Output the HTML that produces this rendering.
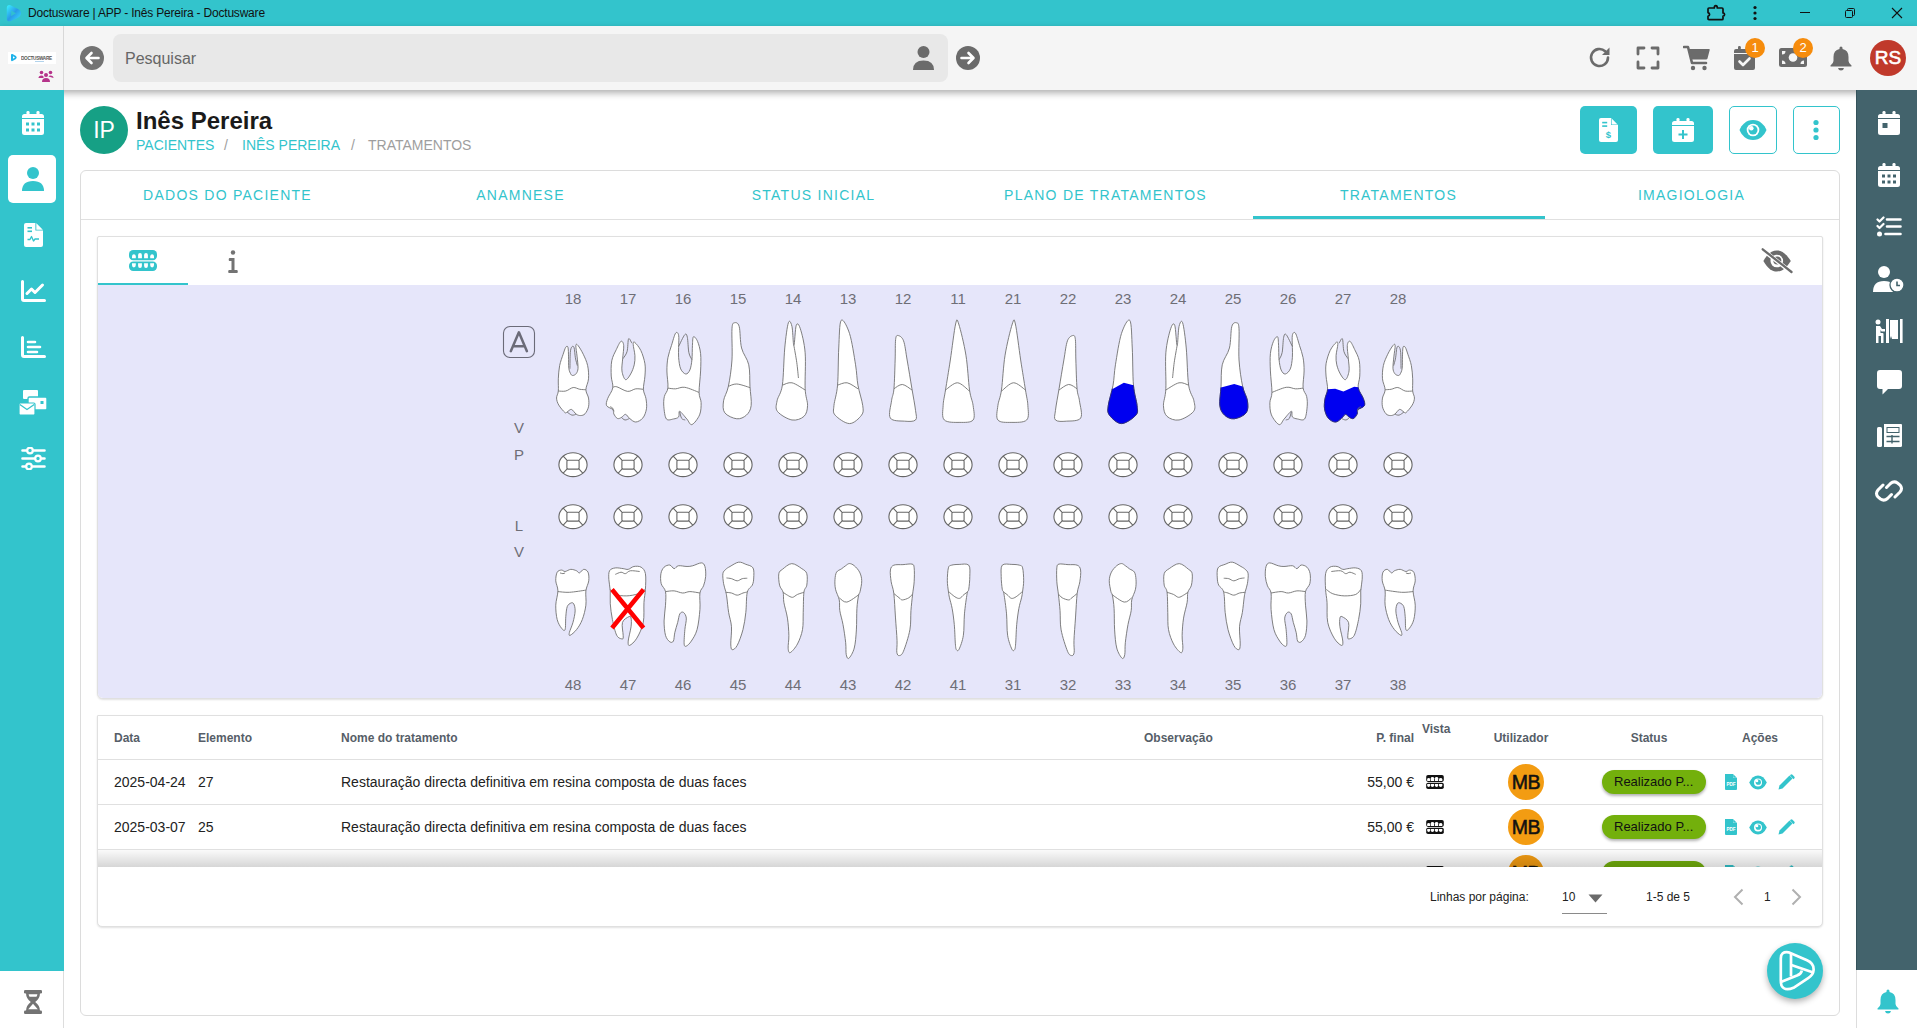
<!DOCTYPE html>
<html><head><meta charset="utf-8">
<style>
*{box-sizing:border-box;margin:0;padding:0}
html,body{width:1917px;height:1028px;overflow:hidden;background:#fff;font-family:"Liberation Sans",sans-serif;position:relative}
.a{position:absolute}
#titlebar{left:0;top:0;width:1917px;height:26px;background:#33c4cc}
#titlebar .t{left:28px;top:6px;font-size:12px;letter-spacing:-.2px;color:#111;white-space:nowrap}
#header{left:0;top:26px;width:1917px;height:64px;background:#f5f5f5;box-shadow:0 3px 7px rgba(0,0,0,.32)}
#logo{left:0;top:26px;width:64px;height:64px;border-right:1px solid #d8d8d8;background:#f5f5f5;z-index:3}
#search{left:113px;top:34px;width:835px;height:48px;background:#e8e8e8;border-radius:8px}
#search .ph{left:12px;top:16px;font-size:16px;color:#666}
#lside{left:0;top:90px;width:64px;height:881px;background:#33c4cc;z-index:2}
#lside2{left:0;top:971px;width:64px;height:57px;background:#fff;border-right:1px solid #ddd;z-index:2}
#rside{left:1856px;top:90px;width:61px;height:880px;background:#43636c;border-left:1px solid #34525a;z-index:2}
#rside2{left:1856px;top:970px;width:61px;height:58px;background:#fff;border-left:1px solid #ddd;z-index:2}
.card{border:1px solid #dcdcdc;border-radius:6px;background:#fff}
.tab{top:170px;height:49px;width:293px;text-align:center;font-size:14px;letter-spacing:1.25px;color:#33c4cc;line-height:50px;font-weight:500}
.num{width:40px;text-align:center;font-size:15px;color:#6e6e76}
.lt{width:20px;text-align:center;font-size:15px;color:#6e6e76}
.th{font-size:12px;font-weight:bold;color:#565e68;white-space:nowrap}
.td{font-size:14px;color:#222;white-space:nowrap}
.mb{width:36px;height:36px;border-radius:50%;background:#f39c12;color:#111;font-size:19.5px;line-height:37px;text-align:center;letter-spacing:-.4px;-webkit-text-stroke:.55px #111}
.chip{width:104px;height:24px;border-radius:12px;background:#73b00c;color:#111;font-size:13px;line-height:24px;padding-left:12px;white-space:nowrap;box-shadow:0 2px 3px rgba(0,0,0,.3)}
.hl{height:1px;background:#e0e0e0}
</style></head><body>
<div id="titlebar" class="a"><div class="t a">Doctusware | APP - Inês Pereira - Doctusware</div></div>
<div id="header" class="a"></div>
<div id="logo" class="a"></div>
<div id="search" class="a"><div class="ph a">Pesquisar</div></div>
<div id="lside" class="a"></div>
<div id="lside2" class="a"></div>
<div id="rside" class="a"></div>
<div id="rside2" class="a"></div>


<!-- title bar icons -->
<svg class="a" style="left:0;top:0;z-index:5" width="26" height="26" viewBox="0 0 26 26"><defs><linearGradient id="lg1" x1="0" y1="0" x2="1" y2="1"><stop offset="0" stop-color="#3af2ff"/><stop offset=".5" stop-color="#2a9ae8"/><stop offset="1" stop-color="#38e0ff"/></linearGradient></defs><path d="M6.8 8 Q6.8 4.6 10.5 5.2 L18.5 9.2 Q21.5 11 21 14 Q20.6 16.5 18 17.8 L11.5 20.8 Q6.8 22.5 6.8 18.5Z" fill="url(#lg1)"/><path d="M11.2 10.5 L16 13.2 L11.2 16.2Z" fill="#33c4cc" opacity=".85"/></svg>
<svg class="a" style="left:1706px;top:3px" width="20" height="19" viewBox="0 0 20 19"><path d="M3 5 H8.3 Q8.3 2.6 9.8 2.6 Q11.3 2.6 11.3 5 H16 Q17 5 17 6 V10 Q18.6 10 18.6 11.6 Q18.6 13.2 17 13.2 V15.7 Q17 16.7 16 16.7 H3 Q2 16.7 2 15.7 V13.2 Q3.6 12.6 3.6 11.4 Q3.6 10.2 2 9.6 V6 Q2 5 3 5Z" fill="none" stroke="#111" stroke-width="1.7" stroke-linejoin="round"/></svg>
<svg class="a" style="left:1750px;top:5px" width="10" height="16" viewBox="0 0 10 16"><circle cx="5" cy="2.5" r="1.6" fill="#111"/><circle cx="5" cy="8" r="1.6" fill="#111"/><circle cx="5" cy="13.5" r="1.6" fill="#111"/></svg>
<div class="a" style="left:1800px;top:12px;width:10px;height:1px;background:#111"></div>
<svg class="a" style="left:1843px;top:6px" width="14" height="14" viewBox="0 0 14 14"><rect x="2.5" y="4.5" width="7" height="7" rx="1" fill="none" stroke="#111" stroke-width="1"/><path d="M4.5 4.5 V3.5 Q4.5 2.5 5.5 2.5 H10.5 Q11.5 2.5 11.5 3.5 V8.5 Q11.5 9.5 10.5 9.5 H9.5" fill="none" stroke="#111" stroke-width="1"/></svg>
<svg class="a" style="left:1890px;top:6px" width="14" height="14" viewBox="0 0 14 14"><path d="M2 2 L12 12 M12 2 L2 12" stroke="#111" stroke-width="1.1"/></svg>

<!-- logo column -->
<div class="a" style="left:8px;top:52px;width:48px;height:12px;background:#fff;z-index:4"></div>
<svg class="a" style="left:10px;top:53px;z-index:5" width="8" height="9" viewBox="0 0 8 9"><path d="M1 2 Q1 0.5 2.5 1 L6 3 Q7.5 4.5 6 6 L2.5 8 Q1 8.5 1 7Z" fill="#1fb3ea"/><path d="M3 3.3 L5 4.5 L3 5.7Z" fill="#fff"/></svg><div class="a" style="left:21px;top:55px;font-size:5.5px;color:#555;z-index:5;letter-spacing:-.35px;font-weight:bold;transform:scaleX(.85);transform-origin:0 0;white-space:nowrap">DOCTUSWARE</div><div class="a" style="left:35px;top:60.5px;width:9px;height:1px;background:#7fb5e0;z-index:5;opacity:.6"></div>
<svg class="a" style="left:38px;top:70px;z-index:5" width="16" height="13" viewBox="0 0 16 13"><circle cx="3.5" cy="2.5" r="1.8" fill="#b5338a"/><circle cx="12.5" cy="2.5" r="1.8" fill="#b5338a"/><circle cx="8" cy="5" r="2" fill="#b5338a"/><path d="M0.5 8 Q0.5 5.5 3.5 5.5 Q5 5.5 5.5 6.5 L5.5 8Z M10.5 6.5 Q11 5.5 12.5 5.5 Q15.5 5.5 15.5 8Z" fill="#b5338a"/><path d="M4 12 Q4 8 8 8 Q12 8 12 12Z" fill="#b5338a"/></svg>

<!-- header icons -->
<svg class="a" style="left:80px;top:46px;z-index:5" width="24" height="24" viewBox="0 0 24 24"><circle cx="12" cy="12" r="12" fill="#737373"/><path d="M18.5 12 H7 M11.5 7 L6.5 12 L11.5 17" fill="none" stroke="#fff" stroke-width="2.6" stroke-linecap="round" stroke-linejoin="round"/></svg>
<svg class="a" style="left:912px;top:46px;z-index:5" width="23" height="25" viewBox="0 0 23 25"><circle cx="11.5" cy="6" r="6" fill="#6b6b6b"/><path d="M1 24 Q1 14.5 11.5 14.5 Q22 14.5 22 24Z" fill="#6b6b6b"/></svg>
<svg class="a" style="left:956px;top:46px;z-index:5" width="24" height="24" viewBox="0 0 24 24"><circle cx="12" cy="12" r="12" fill="#6b6b6b"/><path d="M5.5 12 H17 M12.5 7 L17.5 12 L12.5 17" fill="none" stroke="#fff" stroke-width="2.6" stroke-linecap="round" stroke-linejoin="round"/></svg>

<svg class="a" style="left:1588px;top:46px;z-index:5" width="24" height="24" viewBox="0 0 24 24"><path d="M20 11.5 A8.5 8.5 0 1 1 17.2 5.2" fill="none" stroke="#6b6b6b" stroke-width="2.6" stroke-linecap="round"/><path d="M21.5 1.5 V9 H14Z" fill="#6b6b6b"/></svg>
<svg class="a" style="left:1636px;top:46px;z-index:5" width="24" height="24" viewBox="0 0 24 24"><path d="M2 8 V2 H8 M16 2 H22 V8 M22 16 V22 H16 M8 22 H2 V16" fill="none" stroke="#6b6b6b" stroke-width="2.8" stroke-linecap="round" stroke-linejoin="round"/></svg>
<svg class="a" style="left:1683px;top:45px;z-index:5" width="28" height="26" viewBox="0 0 28 26"><path d="M1 2 H5 L9 18 H23" fill="none" stroke="#6b6b6b" stroke-width="2.6" stroke-linecap="round" stroke-linejoin="round"/><path d="M5.5 4 H26 Q27 4 26.7 5 L24.5 13.5 Q24.2 14.5 23 14.5 H8Z" fill="#6b6b6b"/><circle cx="10" cy="23" r="2.2" fill="#6b6b6b"/><circle cx="21.5" cy="23" r="2.2" fill="#6b6b6b"/></svg>
<svg class="a" style="left:1733px;top:45px;z-index:5" width="23" height="26" viewBox="0 0 23 26"><path d="M1 9 H22 V23 Q22 25 20 25 H3 Q1 25 1 23Z M1 8 V6 Q1 4 3 4 H20 Q22 4 22 6 V8Z" fill="#6b6b6b"/><rect x="5" y="1" width="2.8" height="5" rx="1.2" fill="#6b6b6b"/><rect x="15" y="1" width="2.8" height="5" rx="1.2" fill="#6b6b6b"/><path d="M6.5 16.5 L10 20 L16.5 13.5" fill="none" stroke="#f5f5f5" stroke-width="2.6" stroke-linecap="round" stroke-linejoin="round"/></svg>
<div class="a" style="left:1745px;top:38px;width:20px;height:20px;border-radius:50%;background:#f68c0c;color:#fff;font-size:13px;line-height:20px;text-align:center;z-index:6">1</div>
<svg class="a" style="left:1779px;top:48px;z-index:5" width="28" height="19" viewBox="0 0 28 19"><rect x="0" y="0" width="28" height="19" rx="2.5" fill="#6b6b6b"/><circle cx="14" cy="9.5" r="4.3" fill="#f5f5f5"/><path d="M3 3 H6.5 Q6.5 6.5 3 6.5Z M25 3 V6.5 Q21.5 6.5 21.5 3Z M3 16 V12.5 Q6.5 12.5 6.5 16Z M25 16 H21.5 Q21.5 12.5 25 12.5Z" fill="#f5f5f5"/></svg>
<div class="a" style="left:1793px;top:38px;width:20px;height:20px;border-radius:50%;background:#f68c0c;color:#fff;font-size:13px;line-height:20px;text-align:center;z-index:6">2</div>
<svg class="a" style="left:1829px;top:45px;z-index:5" width="24" height="26" viewBox="0 0 24 26"><path d="M12 1.5 Q13.5 1.5 13.5 3 V4 Q19.5 5.2 19.5 12 V16 Q19.5 18 22.5 20.5 Q23 21.5 22 21.5 H2 Q1 21.5 1.5 20.5 Q4.5 18 4.5 16 V12 Q4.5 5.2 10.5 4 V3 Q10.5 1.5 12 1.5Z" fill="#6b6b6b"/><path d="M9 23 H15 Q14.5 25.5 12 25.5 Q9.5 25.5 9 23Z" fill="#6b6b6b"/></svg>
<div class="a" style="left:1870px;top:40px;width:36px;height:36px;border-radius:50%;background:#c0392b;color:#fff;font-size:19px;line-height:36px;text-align:center;z-index:5;-webkit-text-stroke:.6px #fff;letter-spacing:0">RS</div>


<!-- left sidebar icons -->
<svg class="a" style="left:22px;top:111px;z-index:5" width="22" height="24" viewBox="0 0 22 24"><path d="M0 8 H22 V21.5 Q22 24 19.5 24 H2.5 Q0 24 0 21.5Z M0 7 V5.5 Q0 3 2.5 3 H19.5 Q22 3 22 5.5 V7Z" fill="#fff"/><rect x="4.5" y="0" width="3" height="5" rx="1.3" fill="#fff"/><rect x="14.5" y="0" width="3" height="5" rx="1.3" fill="#fff"/><g fill="#33c4cc"><rect x="4" y="11.5" width="3" height="3"/><rect x="9.5" y="11.5" width="3" height="3"/><rect x="15" y="11.5" width="3" height="3"/><rect x="4" y="17.5" width="3" height="3"/><rect x="9.5" y="17.5" width="3" height="3"/><rect x="15" y="17.5" width="3" height="3"/></g></svg>
<div class="a" style="left:8px;top:155px;width:48px;height:48px;border-radius:5px;background:#fff;z-index:4"></div>
<svg class="a" style="left:22px;top:167px;z-index:5" width="22" height="24" viewBox="0 0 22 24"><circle cx="11" cy="6" r="6" fill="#33c4cc"/><path d="M0 24 Q0 14 11 14 Q22 14 22 24Z" fill="#33c4cc"/></svg>
<svg class="a" style="left:24px;top:223px;z-index:5" width="19" height="24" viewBox="0 0 19 24"><path d="M2 0 H12 L19 7 V22 Q19 24 17 24 H2 Q0 24 0 22 V2 Q0 0 2 0Z" fill="#fff"/><path d="M12 0 V7 H19" fill="#33c4cc" stroke="#33c4cc" stroke-width="1.2"/><path d="M12.3 0.3 L18.7 6.7 H12.3Z" fill="#fff"/><rect x="3.5" y="4" width="4.5" height="1.6" fill="#33c4cc"/><rect x="3.5" y="7.5" width="4.5" height="1.6" fill="#33c4cc"/><path d="M3.5 16.5 H6 L7.5 13.5 L9.5 18 L11 16 H15" fill="none" stroke="#33c4cc" stroke-width="1.3" stroke-linejoin="round"/></svg>
<svg class="a" style="left:21px;top:280px;z-index:5" width="25" height="22" viewBox="0 0 25 22"><path d="M1.5 1.5 V19 Q1.5 20.5 3 20.5 H23.5" fill="none" stroke="#fff" stroke-width="3" stroke-linecap="round"/><path d="M6 13.5 L10.5 9 L14 12.5 L21.5 5" fill="none" stroke="#fff" stroke-width="3" stroke-linecap="round" stroke-linejoin="round"/></svg>
<svg class="a" style="left:21px;top:336px;z-index:5" width="25" height="22" viewBox="0 0 25 22"><path d="M1.5 1.5 V19 Q1.5 20.5 3 20.5 H23.5" fill="none" stroke="#fff" stroke-width="3" stroke-linecap="round"/><path d="M7 6 H14 M7 11 H19 M7 16 H16" fill="none" stroke="#fff" stroke-width="2.6" stroke-linecap="round"/></svg>
<svg class="a" style="left:19px;top:390px;z-index:5" width="28" height="25" viewBox="0 0 28 25"><rect x="4" y="0" width="15" height="9" rx="1" fill="#fff"/><rect x="9" y="7" width="19" height="13" rx="1.5" fill="#fff" stroke="#33c4cc" stroke-width="1.4"/><rect x="21.5" y="11" width="3" height="3" fill="#33c4cc"/><rect x="0" y="13" width="16" height="12" rx="1.2" fill="#fff" stroke="#33c4cc" stroke-width="1.2"/><path d="M0.8 14.5 L8 19.5 L15.2 14.5" fill="none" stroke="#33c4cc" stroke-width="1.3"/></svg>
<svg class="a" style="left:21px;top:447px;z-index:5" width="25" height="23" viewBox="0 0 25 23"><path d="M1.5 3.5 H23.5 M1.5 11.5 H23.5 M1.5 19.5 H23.5" stroke="#fff" stroke-width="2.6" stroke-linecap="round"/><circle cx="9" cy="3.5" r="2.8" fill="#33c4cc" stroke="#fff" stroke-width="2.2"/><circle cx="17" cy="11.5" r="2.8" fill="#33c4cc" stroke="#fff" stroke-width="2.2"/><circle cx="8" cy="19.5" r="2.8" fill="#33c4cc" stroke="#fff" stroke-width="2.2"/></svg>
<svg class="a" style="left:24px;top:990px;z-index:5" width="18" height="24" viewBox="0 0 18 24"><rect x="0" y="0" width="18" height="3.6" rx="1.3" fill="#737373"/><rect x="0" y="20.4" width="18" height="3.6" rx="1.3" fill="#737373"/><path d="M2 3 H16 Q16 8.5 11.2 12 Q16 15.5 16 21 H2 Q2 15.5 6.8 12 Q2 8.5 2 3Z" fill="#737373"/><path d="M4.6 4.2 H13.4 Q13.1 5.8 12.4 6.8 H5.6 Q4.9 5.8 4.6 4.2Z" fill="#fff"/><path d="M9 13.8 L13.8 19.3 H4.2Z" fill="#fff"/></svg>

<!-- right sidebar icons -->
<svg class="a" style="left:1878px;top:111px;z-index:5" width="22" height="24" viewBox="0 0 22 24"><path d="M0 8 H22 V21.5 Q22 24 19.5 24 H2.5 Q0 24 0 21.5Z M0 7 V5.5 Q0 3 2.5 3 H19.5 Q22 3 22 5.5 V7Z" fill="#fff"/><rect x="4.5" y="0" width="3" height="5" rx="1.3" fill="#fff"/><rect x="14.5" y="0" width="3" height="5" rx="1.3" fill="#fff"/><rect x="4.5" y="12" width="5" height="5" fill="#43636c"/></svg>
<svg class="a" style="left:1878px;top:163px;z-index:5" width="22" height="24" viewBox="0 0 22 24"><path d="M0 8 H22 V21.5 Q22 24 19.5 24 H2.5 Q0 24 0 21.5Z M0 7 V5.5 Q0 3 2.5 3 H19.5 Q22 3 22 5.5 V7Z" fill="#fff"/><rect x="4.5" y="0" width="3" height="5" rx="1.3" fill="#fff"/><rect x="14.5" y="0" width="3" height="5" rx="1.3" fill="#fff"/><g fill="#43636c"><rect x="4" y="11.5" width="3" height="3"/><rect x="9.5" y="11.5" width="3" height="3"/><rect x="15" y="11.5" width="3" height="3"/><rect x="4" y="17.5" width="3" height="3"/><rect x="9.5" y="17.5" width="3" height="3"/><rect x="15" y="17.5" width="3" height="3"/></g></svg>
<svg class="a" style="left:1876px;top:216px;z-index:5" width="26" height="21" viewBox="0 0 26 21"><path d="M1.5 3.5 L3.5 5.5 L7.5 1.5 M1.5 10 L3.5 12 L7.5 8" fill="none" stroke="#fff" stroke-width="2.2" stroke-linecap="round" stroke-linejoin="round"/><circle cx="3.5" cy="18" r="2.5" fill="#fff"/><path d="M11 3.5 H24.5 M11 10.5 H24.5 M9.5 18 H24.5" stroke="#fff" stroke-width="2.6" stroke-linecap="round"/></svg>
<svg class="a" style="left:1873px;top:266px;z-index:5" width="32" height="26" viewBox="0 0 32 26"><circle cx="11" cy="6" r="6" fill="#fff"/><path d="M0 26 Q0 15 11 15 Q17 15 20 18 L20 26Z" fill="#fff"/><circle cx="24" cy="19" r="7" fill="#fff" stroke="#43636c" stroke-width="1.3"/><path d="M24 15.5 V19.5 H27" fill="none" stroke="#43636c" stroke-width="1.6"/></svg>
<svg class="a" style="left:1875px;top:319px;z-index:5" width="28" height="24" viewBox="0 0 28 24"><circle cx="3" cy="3" r="2.5" fill="#fff"/><path d="M1 7 H5 L7 10 H10 V12.5 H6.5 L5.5 11 V14 H7.5 Q8.5 14 8.5 15 V24 H6 V17 H3.5 V24 H1Z" fill="#fff"/><rect x="11" y="0" width="3" height="24" fill="#fff"/><path d="M15 1 H23 V20 H17 L16 17 L15 20Z" fill="#fff"/><rect x="25" y="0" width="2.6" height="24" fill="#fff"/></svg>
<svg class="a" style="left:1877px;top:370px;z-index:5" width="25" height="25" viewBox="0 0 25 25"><path d="M3 0 H22 Q25 0 25 3 V16 Q25 19 22 19 H11 L5.5 24.5 V19 H3 Q0 19 0 16 V3 Q0 0 3 0Z" fill="#fff"/></svg>
<svg class="a" style="left:1877px;top:424px;z-index:5" width="25" height="23" viewBox="0 0 25 23"><rect x="0" y="3" width="5" height="20" rx="1.5" fill="#fff"/><path d="M7 0 H24 Q25 0 25 1 V21.5 Q25 23 23.5 23 H7Z" fill="#fff"/><rect x="9.5" y="3" width="13" height="6" fill="#43636c"/><rect x="10.5" y="4" width="11" height="4" fill="#fff"/><path d="M9.5 12.5 H22.5 M9.5 17.5 H22.5 M15 11 V19.5" stroke="#43636c" stroke-width="1.4"/></svg>
<svg class="a" style="left:1874px;top:480px;z-index:5" width="30" height="22" viewBox="0 0 30 22"><path d="M12.5 7.5 L16.5 3.5 Q20 0.5 23.5 3 L26 5 Q29 8.5 26 12 L21 17" fill="none" stroke="#fff" stroke-width="3" stroke-linecap="round"/><path d="M17.5 14.5 L13.5 18.5 Q10 21.5 6.5 19 L4 17 Q1 13.5 4 10 L9 5" fill="none" stroke="#fff" stroke-width="3" stroke-linecap="round"/></svg>
<svg class="a" style="left:1876px;top:988px;z-index:5" width="24" height="26" viewBox="0 0 24 26"><path d="M12 1.5 Q13.5 1.5 13.5 3 V4 Q19.5 5.2 19.5 12 V16 Q19.5 18 22.5 20.5 Q23 21.5 22 21.5 H2 Q1 21.5 1.5 20.5 Q4.5 18 4.5 16 V12 Q4.5 5.2 10.5 4 V3 Q10.5 1.5 12 1.5Z" fill="#33c4cc"/><path d="M9 23 H15 Q14.5 25.5 12 25.5 Q9.5 25.5 9 23Z" fill="#33c4cc"/></svg>

<!-- patient header -->
<div class="a" style="left:80px;top:106px;width:48px;height:48px;border-radius:50%;background:#16a085;color:#fff;font-size:23px;line-height:48px;text-align:center">IP</div>
<div class="a" style="left:136px;top:107px;font-size:24px;font-weight:bold;color:#1a1a1a;white-space:nowrap">Inês Pereira</div>
<div class="a" style="left:136px;top:137px;font-size:14px;color:#33c4cc;white-space:nowrap">PACIENTES</div><div class="a" style="left:224px;top:137px;font-size:14px;color:#9e9e9e">/</div><div class="a" style="left:242px;top:137px;font-size:14px;color:#33c4cc;white-space:nowrap">INÊS PEREIRA</div><div class="a" style="left:351px;top:137px;font-size:14px;color:#9e9e9e">/</div><div class="a bc3" style="left:368px;top:137px;font-size:14px;color:#9e9e9e;white-space:nowrap">TRATAMENTOS</div>


<!-- action buttons -->
<div class="a" style="left:1580px;top:106px;width:57px;height:48px;border-radius:5px;background:#33c4cc"></div>
<svg class="a" style="left:1599px;top:118px" width="19" height="24" viewBox="0 0 19 24"><path d="M2 0 H12 L19 7 V22 Q19 24 17 24 H2 Q0 24 0 22 V2 Q0 0 2 0Z" fill="#fff"/><path d="M12 0 V7 H19Z" fill="#33c4cc"/><path d="M12.6 0.6 L18.4 6.4 H12.6Z" fill="#fff"/><rect x="3.2" y="3.8" width="5" height="1.6" fill="#33c4cc"/><rect x="3.2" y="7.3" width="5" height="1.6" fill="#33c4cc"/><text x="9.5" y="20" font-size="9.5" font-weight="bold" fill="#33c4cc" text-anchor="middle" font-family="Liberation Sans">$</text></svg>
<div class="a" style="left:1653px;top:106px;width:60px;height:48px;border-radius:5px;background:#33c4cc"></div>
<svg class="a" style="left:1672px;top:118px" width="22" height="24" viewBox="0 0 22 24"><path d="M0 8 H22 V21.5 Q22 24 19.5 24 H2.5 Q0 24 0 21.5Z M0 7 V5.5 Q0 3 2.5 3 H19.5 Q22 3 22 5.5 V7Z" fill="#fff"/><rect x="4.5" y="0" width="3" height="5" rx="1.3" fill="#fff"/><rect x="14.5" y="0" width="3" height="5" rx="1.3" fill="#fff"/><path d="M11 12 V21 M6.5 16.5 H15.5" stroke="#33c4cc" stroke-width="2"/></svg>
<div class="a" style="left:1729px;top:106px;width:48px;height:48px;border-radius:5px;border:1px solid #33c4cc;background:#fff"></div>
<svg class="a" style="left:1739px;top:119px" width="28" height="22" viewBox="0 0 28 22"><path d="M14 1 C21 1 25.5 6 27.5 11 C25.5 16 21 21 14 21 C7 21 2.5 16 0.5 11 C2.5 6 7 1 14 1Z" fill="#33c4cc"/><circle cx="14" cy="11" r="6.3" fill="#fff"/><circle cx="14" cy="11" r="4.5" fill="#33c4cc"/><circle cx="12.3" cy="9.3" r="2.3" fill="#fff"/></svg>
<div class="a" style="left:1793px;top:106px;width:47px;height:48px;border-radius:5px;border:1px solid #33c4cc;background:#fff"></div>
<svg class="a" style="left:1811px;top:119px" width="10" height="22" viewBox="0 0 10 22"><circle cx="5" cy="3.5" r="2.6" fill="#33c4cc"/><circle cx="5" cy="11" r="2.6" fill="#33c4cc"/><circle cx="5" cy="18.5" r="2.6" fill="#33c4cc"/></svg>

<!-- outer card -->
<div class="a card" style="left:80px;top:170px;width:1760px;height:846px"></div>
<div class="a" style="left:81px;top:219px;width:1758px;height:1px;background:#e0e0e0"></div>
<div class="a tab" style="left:81px">DADOS DO PACIENTE</div>
<div class="a tab" style="left:374px">ANAMNESE</div>
<div class="a tab" style="left:667px">STATUS INICIAL</div>
<div class="a tab" style="left:959px">PLANO DE TRATAMENTOS</div>
<div class="a tab" style="left:1252px">TRATAMENTOS</div>
<div class="a tab" style="left:1545px">IMAGIOLOGIA</div>
<div class="a" style="left:1253px;top:216px;width:292px;height:3px;background:#33c4cc"></div>

<!-- chart card -->
<div class="a" style="left:97px;top:236px;width:1726px;height:463px;border:1px solid #e0e0e0;border-radius:2px 2px 6px 6px;background:#fff;box-shadow:0 1px 2px rgba(0,0,0,.12)"></div>
<div class="a" style="left:98px;top:285px;width:1724px;height:413px;background:#e6e6fa;border-radius:0 0 5px 5px"></div>
<div class="a" style="left:98px;top:283px;width:90px;height:2px;background:#33c4cc"></div>

<!--CHART-->
<div class="num a" style="left:553px;top:290px">18</div>
<div class="num a" style="left:608px;top:290px">17</div>
<div class="num a" style="left:663px;top:290px">16</div>
<div class="num a" style="left:718px;top:290px">15</div>
<div class="num a" style="left:773px;top:290px">14</div>
<div class="num a" style="left:828px;top:290px">13</div>
<div class="num a" style="left:883px;top:290px">12</div>
<div class="num a" style="left:938px;top:290px">11</div>
<div class="num a" style="left:993px;top:290px">21</div>
<div class="num a" style="left:1048px;top:290px">22</div>
<div class="num a" style="left:1103px;top:290px">23</div>
<div class="num a" style="left:1158px;top:290px">24</div>
<div class="num a" style="left:1213px;top:290px">25</div>
<div class="num a" style="left:1268px;top:290px">26</div>
<div class="num a" style="left:1323px;top:290px">27</div>
<div class="num a" style="left:1378px;top:290px">28</div>
<div class="num a" style="left:553px;top:676px">48</div>
<div class="num a" style="left:608px;top:676px">47</div>
<div class="num a" style="left:663px;top:676px">46</div>
<div class="num a" style="left:718px;top:676px">45</div>
<div class="num a" style="left:773px;top:676px">44</div>
<div class="num a" style="left:828px;top:676px">43</div>
<div class="num a" style="left:883px;top:676px">42</div>
<div class="num a" style="left:938px;top:676px">41</div>
<div class="num a" style="left:993px;top:676px">31</div>
<div class="num a" style="left:1048px;top:676px">32</div>
<div class="num a" style="left:1103px;top:676px">33</div>
<div class="num a" style="left:1158px;top:676px">34</div>
<div class="num a" style="left:1213px;top:676px">35</div>
<div class="num a" style="left:1268px;top:676px">36</div>
<div class="num a" style="left:1323px;top:676px">37</div>
<div class="num a" style="left:1378px;top:676px">38</div>
<svg class="a" style="left:0;top:0;z-index:3" width="1917" height="1028" viewBox="0 0 1917 1028"><g fill="#fff" stroke="#666" stroke-width="1.1"><g transform="translate(573 464.7)"><ellipse cx="0" cy="0" rx="14.1" ry="11.9"/><rect x="-6.1" y="-4.45" width="12.2" height="8.9" rx="1.3" fill="none"/><path d="M-5.6 -4 L-9.8 -8.5 M5.6 -4 L9.8 -8.5 M-5.6 4 L-9.8 8.5 M5.6 4 L9.8 8.5" fill="none"/></g><g transform="translate(573 516.7)"><ellipse cx="0" cy="0" rx="14.1" ry="11.9"/><rect x="-6.1" y="-4.45" width="12.2" height="8.9" rx="1.3" fill="none"/><path d="M-5.6 -4 L-9.8 -8.5 M5.6 -4 L9.8 -8.5 M-5.6 4 L-9.8 8.5 M5.6 4 L9.8 8.5" fill="none"/></g><g transform="translate(628 464.7)"><ellipse cx="0" cy="0" rx="14.1" ry="11.9"/><rect x="-6.1" y="-4.45" width="12.2" height="8.9" rx="1.3" fill="none"/><path d="M-5.6 -4 L-9.8 -8.5 M5.6 -4 L9.8 -8.5 M-5.6 4 L-9.8 8.5 M5.6 4 L9.8 8.5" fill="none"/></g><g transform="translate(628 516.7)"><ellipse cx="0" cy="0" rx="14.1" ry="11.9"/><rect x="-6.1" y="-4.45" width="12.2" height="8.9" rx="1.3" fill="none"/><path d="M-5.6 -4 L-9.8 -8.5 M5.6 -4 L9.8 -8.5 M-5.6 4 L-9.8 8.5 M5.6 4 L9.8 8.5" fill="none"/></g><g transform="translate(683 464.7)"><ellipse cx="0" cy="0" rx="14.1" ry="11.9"/><rect x="-6.1" y="-4.45" width="12.2" height="8.9" rx="1.3" fill="none"/><path d="M-5.6 -4 L-9.8 -8.5 M5.6 -4 L9.8 -8.5 M-5.6 4 L-9.8 8.5 M5.6 4 L9.8 8.5" fill="none"/></g><g transform="translate(683 516.7)"><ellipse cx="0" cy="0" rx="14.1" ry="11.9"/><rect x="-6.1" y="-4.45" width="12.2" height="8.9" rx="1.3" fill="none"/><path d="M-5.6 -4 L-9.8 -8.5 M5.6 -4 L9.8 -8.5 M-5.6 4 L-9.8 8.5 M5.6 4 L9.8 8.5" fill="none"/></g><g transform="translate(738 464.7)"><ellipse cx="0" cy="0" rx="14.1" ry="11.9"/><rect x="-6.1" y="-4.45" width="12.2" height="8.9" rx="1.3" fill="none"/><path d="M-5.6 -4 L-9.8 -8.5 M5.6 -4 L9.8 -8.5 M-5.6 4 L-9.8 8.5 M5.6 4 L9.8 8.5" fill="none"/></g><g transform="translate(738 516.7)"><ellipse cx="0" cy="0" rx="14.1" ry="11.9"/><rect x="-6.1" y="-4.45" width="12.2" height="8.9" rx="1.3" fill="none"/><path d="M-5.6 -4 L-9.8 -8.5 M5.6 -4 L9.8 -8.5 M-5.6 4 L-9.8 8.5 M5.6 4 L9.8 8.5" fill="none"/></g><g transform="translate(793 464.7)"><ellipse cx="0" cy="0" rx="14.1" ry="11.9"/><rect x="-6.1" y="-4.45" width="12.2" height="8.9" rx="1.3" fill="none"/><path d="M-5.6 -4 L-9.8 -8.5 M5.6 -4 L9.8 -8.5 M-5.6 4 L-9.8 8.5 M5.6 4 L9.8 8.5" fill="none"/></g><g transform="translate(793 516.7)"><ellipse cx="0" cy="0" rx="14.1" ry="11.9"/><rect x="-6.1" y="-4.45" width="12.2" height="8.9" rx="1.3" fill="none"/><path d="M-5.6 -4 L-9.8 -8.5 M5.6 -4 L9.8 -8.5 M-5.6 4 L-9.8 8.5 M5.6 4 L9.8 8.5" fill="none"/></g><g transform="translate(848 464.7)"><ellipse cx="0" cy="0" rx="14.1" ry="11.9"/><rect x="-6.1" y="-4.45" width="12.2" height="8.9" rx="1.3" fill="none"/><path d="M-5.6 -4 L-9.8 -8.5 M5.6 -4 L9.8 -8.5 M-5.6 4 L-9.8 8.5 M5.6 4 L9.8 8.5" fill="none"/></g><g transform="translate(848 516.7)"><ellipse cx="0" cy="0" rx="14.1" ry="11.9"/><rect x="-6.1" y="-4.45" width="12.2" height="8.9" rx="1.3" fill="none"/><path d="M-5.6 -4 L-9.8 -8.5 M5.6 -4 L9.8 -8.5 M-5.6 4 L-9.8 8.5 M5.6 4 L9.8 8.5" fill="none"/></g><g transform="translate(903 464.7)"><ellipse cx="0" cy="0" rx="14.1" ry="11.9"/><rect x="-6.1" y="-4.45" width="12.2" height="8.9" rx="1.3" fill="none"/><path d="M-5.6 -4 L-9.8 -8.5 M5.6 -4 L9.8 -8.5 M-5.6 4 L-9.8 8.5 M5.6 4 L9.8 8.5" fill="none"/></g><g transform="translate(903 516.7)"><ellipse cx="0" cy="0" rx="14.1" ry="11.9"/><rect x="-6.1" y="-4.45" width="12.2" height="8.9" rx="1.3" fill="none"/><path d="M-5.6 -4 L-9.8 -8.5 M5.6 -4 L9.8 -8.5 M-5.6 4 L-9.8 8.5 M5.6 4 L9.8 8.5" fill="none"/></g><g transform="translate(958 464.7)"><ellipse cx="0" cy="0" rx="14.1" ry="11.9"/><rect x="-6.1" y="-4.45" width="12.2" height="8.9" rx="1.3" fill="none"/><path d="M-5.6 -4 L-9.8 -8.5 M5.6 -4 L9.8 -8.5 M-5.6 4 L-9.8 8.5 M5.6 4 L9.8 8.5" fill="none"/></g><g transform="translate(958 516.7)"><ellipse cx="0" cy="0" rx="14.1" ry="11.9"/><rect x="-6.1" y="-4.45" width="12.2" height="8.9" rx="1.3" fill="none"/><path d="M-5.6 -4 L-9.8 -8.5 M5.6 -4 L9.8 -8.5 M-5.6 4 L-9.8 8.5 M5.6 4 L9.8 8.5" fill="none"/></g><g transform="translate(1013 464.7)"><ellipse cx="0" cy="0" rx="14.1" ry="11.9"/><rect x="-6.1" y="-4.45" width="12.2" height="8.9" rx="1.3" fill="none"/><path d="M-5.6 -4 L-9.8 -8.5 M5.6 -4 L9.8 -8.5 M-5.6 4 L-9.8 8.5 M5.6 4 L9.8 8.5" fill="none"/></g><g transform="translate(1013 516.7)"><ellipse cx="0" cy="0" rx="14.1" ry="11.9"/><rect x="-6.1" y="-4.45" width="12.2" height="8.9" rx="1.3" fill="none"/><path d="M-5.6 -4 L-9.8 -8.5 M5.6 -4 L9.8 -8.5 M-5.6 4 L-9.8 8.5 M5.6 4 L9.8 8.5" fill="none"/></g><g transform="translate(1068 464.7)"><ellipse cx="0" cy="0" rx="14.1" ry="11.9"/><rect x="-6.1" y="-4.45" width="12.2" height="8.9" rx="1.3" fill="none"/><path d="M-5.6 -4 L-9.8 -8.5 M5.6 -4 L9.8 -8.5 M-5.6 4 L-9.8 8.5 M5.6 4 L9.8 8.5" fill="none"/></g><g transform="translate(1068 516.7)"><ellipse cx="0" cy="0" rx="14.1" ry="11.9"/><rect x="-6.1" y="-4.45" width="12.2" height="8.9" rx="1.3" fill="none"/><path d="M-5.6 -4 L-9.8 -8.5 M5.6 -4 L9.8 -8.5 M-5.6 4 L-9.8 8.5 M5.6 4 L9.8 8.5" fill="none"/></g><g transform="translate(1123 464.7)"><ellipse cx="0" cy="0" rx="14.1" ry="11.9"/><rect x="-6.1" y="-4.45" width="12.2" height="8.9" rx="1.3" fill="none"/><path d="M-5.6 -4 L-9.8 -8.5 M5.6 -4 L9.8 -8.5 M-5.6 4 L-9.8 8.5 M5.6 4 L9.8 8.5" fill="none"/></g><g transform="translate(1123 516.7)"><ellipse cx="0" cy="0" rx="14.1" ry="11.9"/><rect x="-6.1" y="-4.45" width="12.2" height="8.9" rx="1.3" fill="none"/><path d="M-5.6 -4 L-9.8 -8.5 M5.6 -4 L9.8 -8.5 M-5.6 4 L-9.8 8.5 M5.6 4 L9.8 8.5" fill="none"/></g><g transform="translate(1178 464.7)"><ellipse cx="0" cy="0" rx="14.1" ry="11.9"/><rect x="-6.1" y="-4.45" width="12.2" height="8.9" rx="1.3" fill="none"/><path d="M-5.6 -4 L-9.8 -8.5 M5.6 -4 L9.8 -8.5 M-5.6 4 L-9.8 8.5 M5.6 4 L9.8 8.5" fill="none"/></g><g transform="translate(1178 516.7)"><ellipse cx="0" cy="0" rx="14.1" ry="11.9"/><rect x="-6.1" y="-4.45" width="12.2" height="8.9" rx="1.3" fill="none"/><path d="M-5.6 -4 L-9.8 -8.5 M5.6 -4 L9.8 -8.5 M-5.6 4 L-9.8 8.5 M5.6 4 L9.8 8.5" fill="none"/></g><g transform="translate(1233 464.7)"><ellipse cx="0" cy="0" rx="14.1" ry="11.9"/><rect x="-6.1" y="-4.45" width="12.2" height="8.9" rx="1.3" fill="none"/><path d="M-5.6 -4 L-9.8 -8.5 M5.6 -4 L9.8 -8.5 M-5.6 4 L-9.8 8.5 M5.6 4 L9.8 8.5" fill="none"/></g><g transform="translate(1233 516.7)"><ellipse cx="0" cy="0" rx="14.1" ry="11.9"/><rect x="-6.1" y="-4.45" width="12.2" height="8.9" rx="1.3" fill="none"/><path d="M-5.6 -4 L-9.8 -8.5 M5.6 -4 L9.8 -8.5 M-5.6 4 L-9.8 8.5 M5.6 4 L9.8 8.5" fill="none"/></g><g transform="translate(1288 464.7)"><ellipse cx="0" cy="0" rx="14.1" ry="11.9"/><rect x="-6.1" y="-4.45" width="12.2" height="8.9" rx="1.3" fill="none"/><path d="M-5.6 -4 L-9.8 -8.5 M5.6 -4 L9.8 -8.5 M-5.6 4 L-9.8 8.5 M5.6 4 L9.8 8.5" fill="none"/></g><g transform="translate(1288 516.7)"><ellipse cx="0" cy="0" rx="14.1" ry="11.9"/><rect x="-6.1" y="-4.45" width="12.2" height="8.9" rx="1.3" fill="none"/><path d="M-5.6 -4 L-9.8 -8.5 M5.6 -4 L9.8 -8.5 M-5.6 4 L-9.8 8.5 M5.6 4 L9.8 8.5" fill="none"/></g><g transform="translate(1343 464.7)"><ellipse cx="0" cy="0" rx="14.1" ry="11.9"/><rect x="-6.1" y="-4.45" width="12.2" height="8.9" rx="1.3" fill="none"/><path d="M-5.6 -4 L-9.8 -8.5 M5.6 -4 L9.8 -8.5 M-5.6 4 L-9.8 8.5 M5.6 4 L9.8 8.5" fill="none"/></g><g transform="translate(1343 516.7)"><ellipse cx="0" cy="0" rx="14.1" ry="11.9"/><rect x="-6.1" y="-4.45" width="12.2" height="8.9" rx="1.3" fill="none"/><path d="M-5.6 -4 L-9.8 -8.5 M5.6 -4 L9.8 -8.5 M-5.6 4 L-9.8 8.5 M5.6 4 L9.8 8.5" fill="none"/></g><g transform="translate(1398 464.7)"><ellipse cx="0" cy="0" rx="14.1" ry="11.9"/><rect x="-6.1" y="-4.45" width="12.2" height="8.9" rx="1.3" fill="none"/><path d="M-5.6 -4 L-9.8 -8.5 M5.6 -4 L9.8 -8.5 M-5.6 4 L-9.8 8.5 M5.6 4 L9.8 8.5" fill="none"/></g><g transform="translate(1398 516.7)"><ellipse cx="0" cy="0" rx="14.1" ry="11.9"/><rect x="-6.1" y="-4.45" width="12.2" height="8.9" rx="1.3" fill="none"/><path d="M-5.6 -4 L-9.8 -8.5 M5.6 -4 L9.8 -8.5 M-5.6 4 L-9.8 8.5 M5.6 4 L9.8 8.5" fill="none"/></g></g><rect x="503.5" y="326.5" width="31" height="31" rx="6.5" fill="none" stroke="#6b6b78" stroke-width="1.1"/><path d="M510.8 351.2 L518.9 332.3 L526.9 351.2 M513.3 346.2 H524.5" fill="none" stroke="#6b6b78" stroke-width="2.5" stroke-linecap="round" stroke-linejoin="round"/></svg>
<div class="lt a" style="left:509px;top:419px">V</div>
<div class="lt a" style="left:509px;top:446px">P</div>
<div class="lt a" style="left:509px;top:517px">L</div>
<div class="lt a" style="left:509px;top:543px">V</div><svg class="a" style="left:0;top:0;z-index:3" width="1917" height="1028" viewBox="0 0 1917 1028"><g transform="translate(573 0)"><path d="M-8.12 412.48 C-9.51 411.31 -12.87 407.45 -14.25 405.04 C-15.63 402.63 -16.36 400.38 -16.43 398.04 C-16.50 395.71 -14.97 394.24 -14.68 391.03 C-14.39 387.82 -14.90 383.00 -14.68 378.77 C-14.46 374.54 -14.17 369.72 -13.37 365.64 C-12.57 361.56 -10.89 357.32 -9.87 354.26 C-8.85 351.20 -8.04 348.43 -7.24 347.26 C-6.44 346.09 -5.52 345.65 -5.05 347.26 C-4.58 348.87 -4.59 353.39 -4.44 356.89 C-4.29 360.39 -4.59 365.35 -4.18 368.27 C-3.77 371.19 -2.72 373.20 -1.99 374.40 C-1.26 375.60 -0.68 375.60 0.20 375.45 C1.07 375.30 2.46 374.72 3.26 373.52 C4.06 372.32 4.87 371.04 5.02 368.27 C5.17 365.50 4.50 360.68 4.14 356.89 C3.77 353.10 2.68 347.41 2.83 345.51 C2.98 343.61 3.78 344.05 5.02 345.51 C6.26 346.97 8.66 350.90 10.27 354.26 C11.88 357.62 13.78 361.56 14.65 365.64 C15.53 369.72 15.81 374.76 15.52 378.77 C15.23 382.78 12.89 386.51 12.89 389.72 C12.89 392.93 15.08 395.20 15.52 398.04 C15.96 400.88 16.10 404.17 15.52 406.79 C14.94 409.42 13.33 412.33 12.02 413.79 C10.71 415.25 9.10 415.47 7.64 415.54 C6.18 415.61 4.79 415.25 3.26 414.23 C1.73 413.21 -0.02 409.79 -1.55 409.42 C-3.08 409.06 -4.83 411.53 -5.93 412.04 C-7.02 412.55 -6.73 413.65 -8.12 412.48Z" fill="#fff" stroke="#707070" stroke-width="0.9"/><path d="M-3.04 368.71 C-2.98 366.01 -3.01 356.16 -2.69 352.51 C-2.37 348.86 -1.74 347.62 -1.11 346.82 C-0.48 346.02 0.50 345.87 1.08 347.69 C1.66 349.51 1.85 354.77 2.39 357.76 C2.93 360.75 4.00 364.33 4.32 365.64" fill="none" stroke="#707070" stroke-width="0.9"/><path d="M-5.93 412.04 C-5.13 412.55 -2.64 414.75 -1.11 415.11 C0.42 415.48 2.53 414.38 3.26 414.23" fill="none" stroke="#707070" stroke-width="0.9"/><path d="M-14.68 391.03 C-13.44 391.03 -9.72 391.61 -7.24 391.03 C-4.76 390.45 -2.13 387.82 0.20 387.53 C2.54 387.24 4.65 388.91 6.77 389.28 C8.88 389.64 11.87 389.65 12.89 389.72" fill="none" stroke="#707070" stroke-width="0.9"/></g><g transform="translate(628 0)"><path d="M-14.72 409.77 C-15.91 408.41 -20.42 407.56 -21.36 405.69 C-22.30 403.82 -21.36 401.52 -20.34 398.54 C-19.32 395.56 -15.83 391.56 -15.23 387.81 C-14.63 384.06 -16.60 380.58 -16.77 376.07 C-16.94 371.56 -17.10 365.18 -16.25 360.75 C-15.40 356.32 -13.19 352.75 -11.66 349.51 C-10.13 346.27 -8.29 342.02 -7.06 341.34 C-5.83 340.66 -4.59 342.54 -4.30 345.43 C-4.01 348.32 -5.04 354.44 -5.33 358.70 C-5.62 362.95 -6.52 367.47 -6.04 370.96 C-5.56 374.45 -3.92 379.13 -2.47 379.64 C-1.02 380.15 1.19 376.50 2.64 374.03 C4.09 371.56 5.50 367.89 6.22 364.83 C6.93 361.76 7.10 359.04 6.93 355.64 C6.76 352.24 5.22 346.62 5.19 344.41 C5.16 342.20 5.45 341.34 6.73 342.36 C8.01 343.38 11.15 346.95 12.85 350.53 C14.55 354.10 16.26 359.55 16.94 363.81 C17.62 368.07 17.20 371.81 16.94 376.07 C16.69 380.33 15.24 385.61 15.41 389.35 C15.58 393.10 17.45 395.31 17.96 398.54 C18.47 401.77 18.98 405.52 18.47 408.75 C17.96 411.98 16.69 415.73 14.90 417.94 C13.11 420.15 9.96 421.94 7.75 422.03 C5.54 422.11 3.32 419.73 1.62 418.45 C-0.08 417.17 -1.11 414.54 -2.47 414.37 C-3.83 414.20 -5.19 416.75 -6.55 417.43 C-7.91 418.11 -9.36 419.04 -10.64 418.45 C-11.92 417.86 -13.53 415.31 -14.21 413.86 C-14.89 412.41 -13.53 411.13 -14.72 409.77Z" fill="#fff" stroke="#707070" stroke-width="0.9"/><path d="M-5.02 358.70 C-4.34 357.51 -1.87 354.88 -0.93 351.56 C0.01 348.24 -0.20 340.19 0.60 338.79 C1.40 337.39 3.33 342.45 3.87 343.18" fill="none" stroke="#707070" stroke-width="0.9"/><path d="M-17.79 406.71 C-17.36 406.96 -15.74 407.48 -15.23 408.24 C-14.72 409.00 -14.80 410.79 -14.72 411.30" fill="none" stroke="#707070" stroke-width="0.9"/><path d="M-6.55 417.43 C-5.96 417.86 -4.34 419.82 -2.98 419.99 C-1.62 420.16 0.85 418.71 1.62 418.45" fill="none" stroke="#707070" stroke-width="0.9"/><path d="M-15.23 387.30 C-14.55 387.22 -13.62 386.11 -11.15 386.79 C-8.68 387.47 -3.57 391.05 -0.42 391.39 C2.73 391.73 5.11 389.17 7.75 388.83 C10.39 388.49 14.13 389.26 15.41 389.35" fill="none" stroke="#707070" stroke-width="0.9"/></g><g transform="translate(683 0)"><path d="M-16.61 418.96 C-18.23 416.92 -18.83 410.45 -19.17 406.71 C-19.51 402.96 -19.33 399.64 -18.65 396.49 C-17.97 393.34 -15.50 392.06 -15.08 387.81 C-14.66 383.56 -16.10 375.98 -16.10 370.96 C-16.10 365.94 -15.85 361.94 -15.08 357.68 C-14.31 353.43 -12.79 349.51 -11.51 345.43 C-10.23 341.35 -8.61 334.87 -7.42 333.17 C-6.23 331.47 -4.87 332.83 -4.36 335.21 C-3.85 337.59 -4.36 343.73 -4.36 347.47 C-4.36 351.22 -4.70 354.11 -4.36 357.68 C-4.02 361.25 -3.50 366.20 -2.31 368.92 C-1.12 371.64 1.26 373.86 2.79 374.03 C4.32 374.20 5.86 372.32 6.88 369.94 C7.90 367.56 8.49 363.81 8.92 359.73 C9.35 355.65 9.18 349.26 9.43 345.43 C9.68 341.60 9.60 337.43 10.45 336.75 C11.30 336.07 13.35 338.53 14.54 341.34 C15.73 344.15 17.09 348.66 17.60 353.60 C18.11 358.54 17.86 364.49 17.60 370.96 C17.35 377.43 15.99 387.13 16.07 392.41 C16.16 397.69 18.02 398.88 18.11 402.62 C18.20 406.37 18.11 411.22 16.58 414.88 C15.05 418.54 11.05 423.90 8.92 424.58 C6.79 425.26 5.86 421.17 3.82 418.96 C1.78 416.75 -1.97 411.64 -3.33 411.30 C-4.69 410.96 -3.34 415.64 -4.36 416.92 C-5.38 418.20 -7.42 418.62 -9.46 418.96 C-11.50 419.30 -14.99 421.00 -16.61 418.96Z" fill="#fff" stroke="#707070" stroke-width="0.9"/><path d="M-4.36 346.45 C-3.34 344.49 0.32 336.23 1.77 334.70 C3.22 333.17 3.65 334.28 4.33 337.26 C5.01 340.24 5.10 348.83 5.86 352.58 C6.62 356.32 8.41 358.54 8.92 359.73" fill="none" stroke="#707070" stroke-width="0.9"/><path d="M-3.33 411.82 C-2.99 412.93 -2.23 417.09 -1.29 418.45 C-0.36 419.81 1.68 419.73 2.28 419.99" fill="none" stroke="#707070" stroke-width="0.9"/><path d="M-15.08 388.12 C-13.80 388.24 -10.23 388.97 -7.42 388.83 C-4.61 388.69 -2.15 386.70 1.77 387.30 C5.69 387.90 13.69 391.56 16.07 392.41" fill="none" stroke="#707070" stroke-width="0.9"/></g><g transform="translate(738 0)"><path d="M-1.23 418.78 C-4.83 418.38 -11.03 415.78 -13.23 412.78 C-15.43 409.78 -15.03 405.18 -14.43 400.78 C-13.83 396.38 -11.03 393.18 -9.63 386.38 C-8.23 379.58 -6.63 369.59 -6.03 359.99 C-5.43 350.39 -6.43 334.99 -6.03 328.79 C-5.63 322.59 -4.83 323.20 -3.63 322.80 C-2.43 322.40 -0.03 322.20 1.17 326.40 C2.37 330.60 1.96 341.59 3.56 347.99 C5.16 354.39 9.36 358.39 10.76 364.79 C12.16 371.19 11.56 379.58 11.96 386.38 C12.36 393.18 13.76 400.78 13.16 405.58 C12.56 410.38 10.76 412.98 8.36 415.18 C5.96 417.38 2.37 419.18 -1.23 418.78Z" fill="#fff" stroke="#707070" stroke-width="0.9"/><path d="M-9.63 386.38 C-8.23 385.98 -4.83 383.79 -1.23 383.99 C2.37 384.19 9.76 386.98 11.96 387.58" fill="none" stroke="#707070" stroke-width="0.9"/></g><g transform="translate(793 0)"><path d="M-1.04 419.98 C-5.44 419.18 -12.96 414.78 -15.44 411.58 C-17.92 408.38 -16.72 405.18 -15.92 400.78 C-15.12 396.38 -11.92 393.99 -10.64 385.19 C-9.36 376.39 -9.24 358.39 -8.24 347.99 C-7.24 337.59 -5.84 326.40 -4.64 322.80 C-3.44 319.20 -1.96 322.60 -1.04 326.40 C-0.12 330.20 0.16 345.79 0.88 345.59 C1.60 345.39 2.20 328.00 3.28 325.20 C4.36 322.40 5.87 324.19 7.35 328.79 C8.83 333.39 11.35 342.79 12.15 352.79 C12.95 362.79 11.75 379.98 12.15 388.78 C12.55 397.58 14.75 400.98 14.55 405.58 C14.35 410.18 13.55 413.98 10.95 416.38 C8.35 418.78 3.36 420.78 -1.04 419.98Z" fill="#fff" stroke="#707070" stroke-width="0.9"/><path d="M0.88 345.59 C1.36 348.39 3.00 356.99 3.76 362.39 C4.52 367.79 5.16 375.39 5.44 377.99" fill="none" stroke="#707070" stroke-width="0.9"/><path d="M-10.64 385.19 C-9.04 384.79 -4.84 381.99 -1.04 382.79 C2.76 383.59 9.95 388.78 12.15 389.98" fill="none" stroke="#707070" stroke-width="0.9"/></g><g transform="translate(848 0)"><path d="M1.55 423.58 C-2.85 423.58 -10.25 418.18 -12.85 415.18 C-15.45 412.18 -14.45 410.58 -14.05 405.58 C-13.65 400.58 -11.25 394.79 -10.45 385.19 C-9.65 375.59 -9.85 358.79 -9.25 347.99 C-8.65 337.19 -8.65 322.80 -6.85 320.40 C-5.05 318.00 -0.85 326.19 1.55 333.59 C3.95 340.99 6.15 356.19 7.55 364.79 C8.95 373.39 8.74 378.39 9.94 385.19 C11.14 391.99 14.14 400.58 14.74 405.58 C15.34 410.58 15.74 412.18 13.54 415.18 C11.34 418.18 5.95 423.58 1.55 423.58Z" fill="#fff" stroke="#707070" stroke-width="0.9"/><path d="M-10.45 385.19 C-8.85 384.79 -4.25 382.19 -0.85 382.79 C2.55 383.39 8.14 387.78 9.94 388.78" fill="none" stroke="#707070" stroke-width="0.9"/></g><g transform="translate(903 0)"><path d="M-12.66 418.06 C-14.86 414.66 -12.06 405.66 -11.46 400.78 C-10.86 395.90 -9.66 395.58 -9.06 388.78 C-8.46 381.98 -8.14 368.19 -7.86 359.99 C-7.58 351.79 -7.86 343.67 -7.38 339.59 C-6.90 335.51 -6.30 335.31 -4.98 335.51 C-3.66 335.71 -0.98 336.71 0.54 340.79 C2.06 344.87 2.74 351.99 4.14 359.99 C5.54 367.99 7.54 380.38 8.94 388.78 C10.34 397.18 11.93 405.18 12.53 410.38 C13.13 415.58 14.33 418.18 12.53 419.98 C10.73 421.78 5.94 421.50 1.74 421.18 C-2.46 420.86 -10.46 421.46 -12.66 418.06Z" fill="#fff" stroke="#707070" stroke-width="0.9"/><path d="M-9.06 388.78 C-7.66 388.06 -3.66 384.27 -0.66 384.47 C2.34 384.67 7.34 389.06 8.94 389.98" fill="none" stroke="#707070" stroke-width="0.9"/></g><g transform="translate(958 0)"><path d="M-13.67 419.98 C-16.47 417.18 -15.07 410.58 -14.87 405.58 C-14.67 400.58 -13.67 397.58 -12.47 389.98 C-11.27 382.38 -9.35 370.99 -7.67 359.99 C-5.99 348.99 -3.79 330.00 -2.39 324.00 C-0.99 318.00 -0.99 318.80 0.73 324.00 C2.45 329.20 6.13 344.19 7.93 355.19 C9.73 366.19 10.33 381.58 11.53 389.98 C12.73 398.38 14.52 400.58 15.12 405.58 C15.72 410.58 17.32 417.18 15.12 419.98 C12.92 422.78 6.73 422.38 1.93 422.38 C-2.87 422.38 -10.87 422.78 -13.67 419.98Z" fill="#fff" stroke="#707070" stroke-width="0.9"/><path d="M-12.47 389.98 C-10.47 388.78 -4.47 382.59 -0.47 382.79 C3.53 382.99 9.53 389.78 11.53 391.18" fill="none" stroke="#707070" stroke-width="0.9"/></g><g transform="translate(1013 0) scale(-1 1)"><path d="M-13.67 419.98 C-16.47 417.18 -15.07 410.58 -14.87 405.58 C-14.67 400.58 -13.67 397.58 -12.47 389.98 C-11.27 382.38 -9.35 370.99 -7.67 359.99 C-5.99 348.99 -3.79 330.00 -2.39 324.00 C-0.99 318.00 -0.99 318.80 0.73 324.00 C2.45 329.20 6.13 344.19 7.93 355.19 C9.73 366.19 10.33 381.58 11.53 389.98 C12.73 398.38 14.52 400.58 15.12 405.58 C15.72 410.58 17.32 417.18 15.12 419.98 C12.92 422.78 6.73 422.38 1.93 422.38 C-2.87 422.38 -10.87 422.78 -13.67 419.98Z" fill="#fff" stroke="#707070" stroke-width="0.9"/><path d="M-12.47 389.98 C-10.47 388.78 -4.47 382.59 -0.47 382.79 C3.53 382.99 9.53 389.78 11.53 391.18" fill="none" stroke="#707070" stroke-width="0.9"/></g><g transform="translate(1068 0) scale(-1 1)"><path d="M-12.66 418.06 C-14.86 414.66 -12.06 405.66 -11.46 400.78 C-10.86 395.90 -9.66 395.58 -9.06 388.78 C-8.46 381.98 -8.14 368.19 -7.86 359.99 C-7.58 351.79 -7.86 343.67 -7.38 339.59 C-6.90 335.51 -6.30 335.31 -4.98 335.51 C-3.66 335.71 -0.98 336.71 0.54 340.79 C2.06 344.87 2.74 351.99 4.14 359.99 C5.54 367.99 7.54 380.38 8.94 388.78 C10.34 397.18 11.93 405.18 12.53 410.38 C13.13 415.58 14.33 418.18 12.53 419.98 C10.73 421.78 5.94 421.50 1.74 421.18 C-2.46 420.86 -10.46 421.46 -12.66 418.06Z" fill="#fff" stroke="#707070" stroke-width="0.9"/><path d="M-9.06 388.78 C-7.66 388.06 -3.66 384.27 -0.66 384.47 C2.34 384.67 7.34 389.06 8.94 389.98" fill="none" stroke="#707070" stroke-width="0.9"/></g><g transform="translate(1123 0) scale(-1 1)"><path d="M1.55 423.58 C-2.85 423.58 -10.25 418.18 -12.85 415.18 C-15.45 412.18 -14.45 410.58 -14.05 405.58 C-13.65 400.58 -11.25 394.79 -10.45 385.19 C-9.65 375.59 -9.85 358.79 -9.25 347.99 C-8.65 337.19 -8.65 322.80 -6.85 320.40 C-5.05 318.00 -0.85 326.19 1.55 333.59 C3.95 340.99 6.15 356.19 7.55 364.79 C8.95 373.39 8.74 378.39 9.94 385.19 C11.14 391.99 14.14 400.58 14.74 405.58 C15.34 410.58 15.74 412.18 13.54 415.18 C11.34 418.18 5.95 423.58 1.55 423.58Z" fill="#fff" stroke="#707070" stroke-width="0.9"/><clipPath id="cl1123"><path d="M-30.45 385.19 L-10.45 385.19 L-0.85 382.79 L9.94 388.78 L29.94 388.78 L29.94 600 L-30.45 600Z"/></clipPath><path d="M1.55 423.58 C-2.85 423.58 -10.25 418.18 -12.85 415.18 C-15.45 412.18 -14.45 410.58 -14.05 405.58 C-13.65 400.58 -11.25 394.79 -10.45 385.19 C-9.65 375.59 -9.85 358.79 -9.25 347.99 C-8.65 337.19 -8.65 322.80 -6.85 320.40 C-5.05 318.00 -0.85 326.19 1.55 333.59 C3.95 340.99 6.15 356.19 7.55 364.79 C8.95 373.39 8.74 378.39 9.94 385.19 C11.14 391.99 14.14 400.58 14.74 405.58 C15.34 410.58 15.74 412.18 13.54 415.18 C11.34 418.18 5.95 423.58 1.55 423.58Z" fill="#0000f0" stroke="#2a2a80" stroke-width="0.9" clip-path="url(#cl1123)"/></g><g transform="translate(1178 0) scale(-1 1)"><path d="M-1.04 419.98 C-5.44 419.18 -12.96 414.78 -15.44 411.58 C-17.92 408.38 -16.72 405.18 -15.92 400.78 C-15.12 396.38 -11.92 393.99 -10.64 385.19 C-9.36 376.39 -9.24 358.39 -8.24 347.99 C-7.24 337.59 -5.84 326.40 -4.64 322.80 C-3.44 319.20 -1.96 322.60 -1.04 326.40 C-0.12 330.20 0.16 345.79 0.88 345.59 C1.60 345.39 2.20 328.00 3.28 325.20 C4.36 322.40 5.87 324.19 7.35 328.79 C8.83 333.39 11.35 342.79 12.15 352.79 C12.95 362.79 11.75 379.98 12.15 388.78 C12.55 397.58 14.75 400.98 14.55 405.58 C14.35 410.18 13.55 413.98 10.95 416.38 C8.35 418.78 3.36 420.78 -1.04 419.98Z" fill="#fff" stroke="#707070" stroke-width="0.9"/><path d="M0.88 345.59 C1.36 348.39 3.00 356.99 3.76 362.39 C4.52 367.79 5.16 375.39 5.44 377.99" fill="none" stroke="#707070" stroke-width="0.9"/><path d="M-10.64 385.19 C-9.04 384.79 -4.84 381.99 -1.04 382.79 C2.76 383.59 9.95 388.78 12.15 389.98" fill="none" stroke="#707070" stroke-width="0.9"/></g><g transform="translate(1233 0) scale(-1 1)"><path d="M-1.23 418.78 C-4.83 418.38 -11.03 415.78 -13.23 412.78 C-15.43 409.78 -15.03 405.18 -14.43 400.78 C-13.83 396.38 -11.03 393.18 -9.63 386.38 C-8.23 379.58 -6.63 369.59 -6.03 359.99 C-5.43 350.39 -6.43 334.99 -6.03 328.79 C-5.63 322.59 -4.83 323.20 -3.63 322.80 C-2.43 322.40 -0.03 322.20 1.17 326.40 C2.37 330.60 1.96 341.59 3.56 347.99 C5.16 354.39 9.36 358.39 10.76 364.79 C12.16 371.19 11.56 379.58 11.96 386.38 C12.36 393.18 13.76 400.78 13.16 405.58 C12.56 410.38 10.76 412.98 8.36 415.18 C5.96 417.38 2.37 419.18 -1.23 418.78Z" fill="#fff" stroke="#707070" stroke-width="0.9"/><clipPath id="cl1233"><path d="M-29.63 386.38 L-9.63 386.38 L-1.23 383.99 L11.96 387.58 L31.96 387.58 L31.96 600 L-29.63 600Z"/></clipPath><path d="M-1.23 418.78 C-4.83 418.38 -11.03 415.78 -13.23 412.78 C-15.43 409.78 -15.03 405.18 -14.43 400.78 C-13.83 396.38 -11.03 393.18 -9.63 386.38 C-8.23 379.58 -6.63 369.59 -6.03 359.99 C-5.43 350.39 -6.43 334.99 -6.03 328.79 C-5.63 322.59 -4.83 323.20 -3.63 322.80 C-2.43 322.40 -0.03 322.20 1.17 326.40 C2.37 330.60 1.96 341.59 3.56 347.99 C5.16 354.39 9.36 358.39 10.76 364.79 C12.16 371.19 11.56 379.58 11.96 386.38 C12.36 393.18 13.76 400.78 13.16 405.58 C12.56 410.38 10.76 412.98 8.36 415.18 C5.96 417.38 2.37 419.18 -1.23 418.78Z" fill="#0000f0" stroke="#2a2a80" stroke-width="0.9" clip-path="url(#cl1233)"/></g><g transform="translate(1288 0) scale(-1 1)"><path d="M-16.61 418.96 C-18.23 416.92 -18.83 410.45 -19.17 406.71 C-19.51 402.96 -19.33 399.64 -18.65 396.49 C-17.97 393.34 -15.50 392.06 -15.08 387.81 C-14.66 383.56 -16.10 375.98 -16.10 370.96 C-16.10 365.94 -15.85 361.94 -15.08 357.68 C-14.31 353.43 -12.79 349.51 -11.51 345.43 C-10.23 341.35 -8.61 334.87 -7.42 333.17 C-6.23 331.47 -4.87 332.83 -4.36 335.21 C-3.85 337.59 -4.36 343.73 -4.36 347.47 C-4.36 351.22 -4.70 354.11 -4.36 357.68 C-4.02 361.25 -3.50 366.20 -2.31 368.92 C-1.12 371.64 1.26 373.86 2.79 374.03 C4.32 374.20 5.86 372.32 6.88 369.94 C7.90 367.56 8.49 363.81 8.92 359.73 C9.35 355.65 9.18 349.26 9.43 345.43 C9.68 341.60 9.60 337.43 10.45 336.75 C11.30 336.07 13.35 338.53 14.54 341.34 C15.73 344.15 17.09 348.66 17.60 353.60 C18.11 358.54 17.86 364.49 17.60 370.96 C17.35 377.43 15.99 387.13 16.07 392.41 C16.16 397.69 18.02 398.88 18.11 402.62 C18.20 406.37 18.11 411.22 16.58 414.88 C15.05 418.54 11.05 423.90 8.92 424.58 C6.79 425.26 5.86 421.17 3.82 418.96 C1.78 416.75 -1.97 411.64 -3.33 411.30 C-4.69 410.96 -3.34 415.64 -4.36 416.92 C-5.38 418.20 -7.42 418.62 -9.46 418.96 C-11.50 419.30 -14.99 421.00 -16.61 418.96Z" fill="#fff" stroke="#707070" stroke-width="0.9"/><path d="M-4.36 346.45 C-3.34 344.49 0.32 336.23 1.77 334.70 C3.22 333.17 3.65 334.28 4.33 337.26 C5.01 340.24 5.10 348.83 5.86 352.58 C6.62 356.32 8.41 358.54 8.92 359.73" fill="none" stroke="#707070" stroke-width="0.9"/><path d="M-3.33 411.82 C-2.99 412.93 -2.23 417.09 -1.29 418.45 C-0.36 419.81 1.68 419.73 2.28 419.99" fill="none" stroke="#707070" stroke-width="0.9"/><path d="M-15.08 388.12 C-13.80 388.24 -10.23 388.97 -7.42 388.83 C-4.61 388.69 -2.15 386.70 1.77 387.30 C5.69 387.90 13.69 391.56 16.07 392.41" fill="none" stroke="#707070" stroke-width="0.9"/></g><g transform="translate(1343 0) scale(-1 1)"><path d="M-14.72 409.77 C-15.91 408.41 -20.42 407.56 -21.36 405.69 C-22.30 403.82 -21.36 401.52 -20.34 398.54 C-19.32 395.56 -15.83 391.56 -15.23 387.81 C-14.63 384.06 -16.60 380.58 -16.77 376.07 C-16.94 371.56 -17.10 365.18 -16.25 360.75 C-15.40 356.32 -13.19 352.75 -11.66 349.51 C-10.13 346.27 -8.29 342.02 -7.06 341.34 C-5.83 340.66 -4.59 342.54 -4.30 345.43 C-4.01 348.32 -5.04 354.44 -5.33 358.70 C-5.62 362.95 -6.52 367.47 -6.04 370.96 C-5.56 374.45 -3.92 379.13 -2.47 379.64 C-1.02 380.15 1.19 376.50 2.64 374.03 C4.09 371.56 5.50 367.89 6.22 364.83 C6.93 361.76 7.10 359.04 6.93 355.64 C6.76 352.24 5.22 346.62 5.19 344.41 C5.16 342.20 5.45 341.34 6.73 342.36 C8.01 343.38 11.15 346.95 12.85 350.53 C14.55 354.10 16.26 359.55 16.94 363.81 C17.62 368.07 17.20 371.81 16.94 376.07 C16.69 380.33 15.24 385.61 15.41 389.35 C15.58 393.10 17.45 395.31 17.96 398.54 C18.47 401.77 18.98 405.52 18.47 408.75 C17.96 411.98 16.69 415.73 14.90 417.94 C13.11 420.15 9.96 421.94 7.75 422.03 C5.54 422.11 3.32 419.73 1.62 418.45 C-0.08 417.17 -1.11 414.54 -2.47 414.37 C-3.83 414.20 -5.19 416.75 -6.55 417.43 C-7.91 418.11 -9.36 419.04 -10.64 418.45 C-11.92 417.86 -13.53 415.31 -14.21 413.86 C-14.89 412.41 -13.53 411.13 -14.72 409.77Z" fill="#fff" stroke="#707070" stroke-width="0.9"/><clipPath id="cl1343"><path d="M-35.23 387.30 L-15.23 387.30 L-11.15 386.79 L-0.42 391.39 L7.75 388.83 L15.41 389.35 L35.41 389.35 L35.41 600 L-35.23 600Z"/></clipPath><path d="M-14.72 409.77 C-15.91 408.41 -20.42 407.56 -21.36 405.69 C-22.30 403.82 -21.36 401.52 -20.34 398.54 C-19.32 395.56 -15.83 391.56 -15.23 387.81 C-14.63 384.06 -16.60 380.58 -16.77 376.07 C-16.94 371.56 -17.10 365.18 -16.25 360.75 C-15.40 356.32 -13.19 352.75 -11.66 349.51 C-10.13 346.27 -8.29 342.02 -7.06 341.34 C-5.83 340.66 -4.59 342.54 -4.30 345.43 C-4.01 348.32 -5.04 354.44 -5.33 358.70 C-5.62 362.95 -6.52 367.47 -6.04 370.96 C-5.56 374.45 -3.92 379.13 -2.47 379.64 C-1.02 380.15 1.19 376.50 2.64 374.03 C4.09 371.56 5.50 367.89 6.22 364.83 C6.93 361.76 7.10 359.04 6.93 355.64 C6.76 352.24 5.22 346.62 5.19 344.41 C5.16 342.20 5.45 341.34 6.73 342.36 C8.01 343.38 11.15 346.95 12.85 350.53 C14.55 354.10 16.26 359.55 16.94 363.81 C17.62 368.07 17.20 371.81 16.94 376.07 C16.69 380.33 15.24 385.61 15.41 389.35 C15.58 393.10 17.45 395.31 17.96 398.54 C18.47 401.77 18.98 405.52 18.47 408.75 C17.96 411.98 16.69 415.73 14.90 417.94 C13.11 420.15 9.96 421.94 7.75 422.03 C5.54 422.11 3.32 419.73 1.62 418.45 C-0.08 417.17 -1.11 414.54 -2.47 414.37 C-3.83 414.20 -5.19 416.75 -6.55 417.43 C-7.91 418.11 -9.36 419.04 -10.64 418.45 C-11.92 417.86 -13.53 415.31 -14.21 413.86 C-14.89 412.41 -13.53 411.13 -14.72 409.77Z" fill="#0000f0" stroke="#2a2a80" stroke-width="0.9" clip-path="url(#cl1343)"/><path d="M-5.02 358.70 C-4.34 357.51 -1.87 354.88 -0.93 351.56 C0.01 348.24 -0.20 340.19 0.60 338.79 C1.40 337.39 3.33 342.45 3.87 343.18" fill="none" stroke="#707070" stroke-width="0.9"/><path d="M-17.79 406.71 C-17.36 406.96 -15.74 407.48 -15.23 408.24 C-14.72 409.00 -14.80 410.79 -14.72 411.30" fill="none" stroke="#707070" stroke-width="0.9"/><path d="M-6.55 417.43 C-5.96 417.86 -4.34 419.82 -2.98 419.99 C-1.62 420.16 0.85 418.71 1.62 418.45" fill="none" stroke="#707070" stroke-width="0.9"/></g><g transform="translate(1398 0) scale(-1 1)"><path d="M-8.12 412.48 C-9.51 411.31 -12.87 407.45 -14.25 405.04 C-15.63 402.63 -16.36 400.38 -16.43 398.04 C-16.50 395.71 -14.97 394.24 -14.68 391.03 C-14.39 387.82 -14.90 383.00 -14.68 378.77 C-14.46 374.54 -14.17 369.72 -13.37 365.64 C-12.57 361.56 -10.89 357.32 -9.87 354.26 C-8.85 351.20 -8.04 348.43 -7.24 347.26 C-6.44 346.09 -5.52 345.65 -5.05 347.26 C-4.58 348.87 -4.59 353.39 -4.44 356.89 C-4.29 360.39 -4.59 365.35 -4.18 368.27 C-3.77 371.19 -2.72 373.20 -1.99 374.40 C-1.26 375.60 -0.68 375.60 0.20 375.45 C1.07 375.30 2.46 374.72 3.26 373.52 C4.06 372.32 4.87 371.04 5.02 368.27 C5.17 365.50 4.50 360.68 4.14 356.89 C3.77 353.10 2.68 347.41 2.83 345.51 C2.98 343.61 3.78 344.05 5.02 345.51 C6.26 346.97 8.66 350.90 10.27 354.26 C11.88 357.62 13.78 361.56 14.65 365.64 C15.53 369.72 15.81 374.76 15.52 378.77 C15.23 382.78 12.89 386.51 12.89 389.72 C12.89 392.93 15.08 395.20 15.52 398.04 C15.96 400.88 16.10 404.17 15.52 406.79 C14.94 409.42 13.33 412.33 12.02 413.79 C10.71 415.25 9.10 415.47 7.64 415.54 C6.18 415.61 4.79 415.25 3.26 414.23 C1.73 413.21 -0.02 409.79 -1.55 409.42 C-3.08 409.06 -4.83 411.53 -5.93 412.04 C-7.02 412.55 -6.73 413.65 -8.12 412.48Z" fill="#fff" stroke="#707070" stroke-width="0.9"/><path d="M-3.04 368.71 C-2.98 366.01 -3.01 356.16 -2.69 352.51 C-2.37 348.86 -1.74 347.62 -1.11 346.82 C-0.48 346.02 0.50 345.87 1.08 347.69 C1.66 349.51 1.85 354.77 2.39 357.76 C2.93 360.75 4.00 364.33 4.32 365.64" fill="none" stroke="#707070" stroke-width="0.9"/><path d="M-5.93 412.04 C-5.13 412.55 -2.64 414.75 -1.11 415.11 C0.42 415.48 2.53 414.38 3.26 414.23" fill="none" stroke="#707070" stroke-width="0.9"/><path d="M-14.68 391.03 C-13.44 391.03 -9.72 391.61 -7.24 391.03 C-4.76 390.45 -2.13 387.82 0.20 387.53 C2.54 387.24 4.65 388.91 6.77 389.28 C8.88 389.64 11.87 389.65 12.89 389.72" fill="none" stroke="#707070" stroke-width="0.9"/></g><g transform="translate(573 0)"><path d="M-15.09 590.86 C-15.09 586.80 -17.12 583.93 -17.24 580.82 C-17.36 577.71 -16.77 574.00 -15.81 572.21 C-14.85 570.42 -12.81 570.18 -11.50 570.06 C-10.19 569.94 -9.47 571.62 -7.92 571.50 C-6.37 571.38 -4.09 569.47 -2.18 569.35 C-0.27 569.23 2.12 570.18 3.56 570.78 C5.00 571.38 5.23 573.17 6.43 572.93 C7.62 572.69 9.29 569.47 10.73 569.35 C12.17 569.23 14.20 570.30 15.04 572.21 C15.88 574.12 16.11 577.71 15.75 580.82 C15.39 583.93 13.36 586.80 12.88 590.86 C12.40 594.92 13.48 600.43 12.88 605.21 C12.28 609.99 10.85 615.48 9.30 619.55 C7.75 623.62 5.59 626.97 3.56 629.60 C1.53 632.23 -1.70 634.85 -2.90 635.33 C-4.09 635.81 -4.09 634.61 -3.61 632.46 C-3.13 630.31 -0.99 626.00 -0.03 622.42 C0.93 618.83 2.01 614.06 2.13 610.95 C2.25 607.84 1.41 605.09 0.69 603.77 C-0.03 602.45 -1.11 602.58 -2.18 603.06 C-3.25 603.54 -4.92 604.37 -5.76 606.64 C-6.60 608.91 -6.84 612.85 -7.20 616.68 C-7.56 620.51 -7.20 627.69 -7.92 629.60 C-8.64 631.51 -10.19 629.84 -11.50 628.16 C-12.81 626.48 -14.85 623.38 -15.81 619.55 C-16.77 615.72 -17.36 609.99 -17.24 605.21 C-17.12 600.43 -15.09 594.92 -15.09 590.86Z" fill="#fff" stroke="#707070" stroke-width="0.9"/><path d="M-12.94 572.93 C-12.46 573.05 -10.91 573.65 -10.07 573.65 C-9.23 573.65 -8.28 573.05 -7.92 572.93" fill="none" stroke="#707070" stroke-width="0.9"/><path d="M-15.09 591.58 C-13.18 591.70 -8.27 592.54 -3.61 592.30 C1.05 592.06 10.13 590.51 12.88 590.15" fill="none" stroke="#707070" stroke-width="0.9"/></g><g transform="translate(628 0)"><path d="M-17.73 590.86 C-17.97 586.80 -19.04 582.74 -19.16 579.39 C-19.28 576.04 -19.52 572.69 -18.45 570.78 C-17.38 568.87 -14.98 568.27 -12.71 567.91 C-10.44 567.55 -6.97 568.39 -4.82 568.63 C-2.67 568.87 -1.59 569.71 0.20 569.35 C1.99 568.99 3.79 566.84 5.94 566.48 C8.09 566.12 11.20 566.00 13.11 567.19 C15.02 568.38 16.70 569.94 17.42 573.65 C18.14 577.36 17.66 584.65 17.42 589.43 C17.18 594.21 16.34 596.84 15.98 602.34 C15.62 607.84 16.46 616.44 15.27 622.42 C14.07 628.40 11.08 634.37 8.81 638.20 C6.54 642.03 3.08 644.90 1.64 645.38 C0.20 645.86 -0.04 644.18 0.20 641.07 C0.44 637.96 2.59 630.56 3.07 626.73 C3.55 622.90 3.43 619.80 3.07 618.12 C2.71 616.44 2.35 615.96 0.92 616.68 C-0.51 617.40 -4.58 619.31 -5.54 622.42 C-6.50 625.53 -4.82 632.58 -4.82 635.33 C-4.82 638.08 -4.46 638.92 -5.54 638.92 C-6.62 638.92 -9.60 638.56 -11.27 635.33 C-12.94 632.10 -14.50 624.81 -15.58 619.55 C-16.66 614.29 -17.37 608.55 -17.73 603.77 C-18.09 598.99 -17.49 594.92 -17.73 590.86Z" fill="#fff" stroke="#707070" stroke-width="0.9"/><path d="M-12.71 574.37 C-11.75 574.01 -8.64 572.33 -6.97 572.21 C-5.30 572.09 -4.22 573.89 -2.67 573.65 C-1.12 573.41 -0.04 571.14 2.35 570.78 C4.74 570.42 10.12 571.38 11.68 571.50" fill="none" stroke="#707070" stroke-width="0.9"/><path d="M-17.73 589.43 C-16.89 590.27 -15.46 593.38 -12.71 594.45 C-9.96 595.53 -5.06 596.00 -1.23 595.88 C2.60 595.76 7.25 594.81 10.24 593.73 C13.23 592.65 15.62 590.15 16.70 589.43" fill="none" stroke="#707070" stroke-width="0.9"/></g><g transform="translate(683 0)"><path d="M-17.50 591.58 C-18.22 587.99 -21.04 586.68 -21.80 583.69 C-22.57 580.70 -22.57 576.40 -22.09 573.65 C-21.61 570.90 -20.41 568.62 -18.93 567.19 C-17.45 565.76 -14.87 564.80 -13.20 565.04 C-11.53 565.28 -10.33 568.51 -8.89 568.63 C-7.46 568.75 -6.74 566.12 -4.59 565.76 C-2.44 565.40 1.63 566.48 4.02 566.48 C6.41 566.48 7.37 566.36 9.76 565.76 C12.15 565.16 16.33 562.77 18.36 562.89 C20.39 563.01 21.23 564.21 21.95 566.48 C22.67 568.75 22.91 573.29 22.67 576.52 C22.43 579.75 21.48 583.09 20.52 585.84 C19.56 588.59 17.53 589.08 16.93 593.02 C16.33 596.96 17.41 603.41 16.93 609.51 C16.45 615.61 15.50 624.34 14.06 629.60 C12.62 634.86 10.11 638.32 8.32 641.07 C6.53 643.82 4.50 645.61 3.30 646.09 C2.10 646.57 1.39 646.69 1.15 643.94 C0.91 641.19 1.51 633.90 1.87 629.60 C2.23 625.30 3.54 620.99 3.30 618.12 C3.06 615.25 1.50 613.10 0.43 612.38 C-0.65 611.66 -2.19 612.15 -3.15 613.82 C-4.11 615.49 -4.47 619.31 -5.31 622.42 C-6.15 625.53 -7.45 629.35 -8.17 632.46 C-8.89 635.57 -8.77 639.52 -9.61 641.07 C-10.45 642.62 -11.88 642.75 -13.20 641.79 C-14.51 640.83 -16.55 638.80 -17.50 635.33 C-18.45 631.86 -18.93 626.01 -18.93 620.99 C-18.93 615.97 -17.74 610.11 -17.50 605.21 C-17.26 600.31 -16.78 595.17 -17.50 591.58Z" fill="#fff" stroke="#707070" stroke-width="0.9"/><path d="M-17.50 591.58 C-16.07 591.46 -11.76 590.62 -8.89 590.86 C-6.02 591.10 -2.91 592.90 -0.28 593.02 C2.35 593.14 4.02 591.58 6.89 591.58 C9.76 591.58 15.26 592.78 16.93 593.02" fill="none" stroke="#707070" stroke-width="0.9"/></g><g transform="translate(738 0)"><path d="M-12.25 591.58 C-12.80 589.19 -13.92 586.68 -14.40 583.69 C-14.88 580.70 -15.48 576.04 -15.12 573.65 C-14.76 571.26 -13.45 570.55 -12.25 569.35 C-11.05 568.15 -10.10 567.68 -7.95 566.48 C-5.80 565.28 -1.97 562.53 0.66 562.17 C3.29 561.81 5.44 563.36 7.83 564.32 C10.22 565.28 13.70 565.64 15.01 567.91 C16.32 570.18 15.84 575.08 15.72 577.95 C15.60 580.82 15.36 582.74 14.29 585.13 C13.21 587.52 10.35 587.76 9.27 592.30 C8.19 596.84 8.55 606.16 7.83 612.38 C7.11 618.60 6.40 624.10 4.97 629.60 C3.54 635.10 1.02 642.03 -0.77 645.38 C-2.56 648.73 -4.71 649.92 -5.79 649.68 C-6.87 649.44 -7.11 647.77 -7.23 643.94 C-7.35 640.12 -6.15 631.99 -6.51 626.73 C-6.87 621.47 -8.62 617.16 -9.38 612.38 C-10.15 607.60 -10.62 601.51 -11.10 598.04 C-11.58 594.57 -11.70 593.97 -12.25 591.58Z" fill="#fff" stroke="#707070" stroke-width="0.9"/><path d="M-11.53 577.95 C-10.69 578.07 -8.30 578.19 -6.51 578.67 C-4.72 579.15 -2.56 580.82 -0.77 580.82 C1.02 580.82 2.58 579.10 4.25 578.67 C5.92 578.24 8.43 578.31 9.27 578.24" fill="none" stroke="#707070" stroke-width="0.9"/><path d="M-12.25 592.30 C-11.29 592.42 -8.42 592.54 -6.51 593.02 C-4.60 593.50 -2.68 595.17 -0.77 595.17 C1.14 595.17 3.30 593.55 4.97 593.02 C6.64 592.49 8.55 592.18 9.27 592.01" fill="none" stroke="#707070" stroke-width="0.9"/></g><g transform="translate(793 0)"><path d="M-9.87 592.30 C-10.59 589.43 -12.73 588.24 -13.45 585.13 C-14.17 582.02 -14.65 576.28 -14.17 573.65 C-13.69 571.02 -12.73 571.02 -10.58 569.35 C-8.43 567.68 -4.49 563.73 -1.26 563.61 C1.97 563.49 6.27 566.96 8.78 568.63 C11.29 570.30 12.96 570.90 13.80 573.65 C14.64 576.40 14.28 582.02 13.80 585.13 C13.32 588.24 11.53 587.76 10.93 592.30 C10.33 596.84 10.46 606.16 10.22 612.38 C9.98 618.60 10.46 624.34 9.50 629.60 C8.54 634.86 6.51 640.12 4.48 643.94 C2.45 647.77 -1.14 651.83 -2.69 652.55 C-4.25 653.27 -4.61 651.11 -4.85 648.24 C-5.09 645.37 -4.01 640.35 -4.13 635.33 C-4.25 630.31 -4.72 623.62 -5.56 618.12 C-6.40 612.62 -8.43 606.64 -9.15 602.34 C-9.87 598.04 -9.15 595.17 -9.87 592.30Z" fill="#fff" stroke="#707070" stroke-width="0.9"/><path d="M-9.87 592.30 C-9.15 592.78 -7.11 594.33 -5.56 595.17 C-4.00 596.01 -2.21 597.44 -0.54 597.32 C1.13 597.20 2.57 595.29 4.48 594.45 C6.39 593.61 9.86 592.66 10.93 592.30" fill="none" stroke="#707070" stroke-width="0.9"/></g><g transform="translate(848 0)"><path d="M-8.74 599.94 C-9.45 596.37 -11.77 592.63 -12.48 589.24 C-13.19 585.85 -13.20 582.46 -13.02 579.61 C-12.84 576.76 -12.48 573.90 -11.41 572.12 C-10.34 570.34 -8.12 569.98 -6.60 568.91 C-5.08 567.84 -3.66 566.59 -2.32 565.70 C-0.98 564.81 0.00 563.56 1.43 563.56 C2.86 563.56 4.55 564.27 6.24 565.70 C7.93 567.13 10.34 569.62 11.59 572.12 C12.84 574.62 13.64 577.47 13.73 580.68 C13.82 583.89 12.67 588.88 12.13 591.38 C11.60 593.88 11.05 592.81 10.52 595.66 C9.98 598.51 9.28 602.79 8.92 608.50 C8.56 614.21 8.83 623.30 8.38 629.90 C7.93 636.50 7.49 643.36 6.24 648.09 C4.99 652.82 2.23 657.19 0.89 658.26 C-0.45 659.33 -1.25 657.10 -1.78 654.51 C-2.31 651.92 -1.78 647.73 -2.32 642.74 C-2.85 637.75 -4.01 629.90 -4.99 624.55 C-5.97 619.20 -7.57 614.74 -8.20 610.64 C-8.82 606.54 -8.03 603.51 -8.74 599.94Z" fill="#fff" stroke="#707070" stroke-width="0.9"/><path d="M-8.74 597.80 C-7.49 598.51 -4.55 602.62 -1.25 602.08 C2.05 601.55 9.01 595.84 11.06 594.59" fill="none" stroke="#707070" stroke-width="0.9"/></g><g transform="translate(903 0)"><path d="M-9.17 593.52 C-9.88 587.63 -11.27 585.67 -11.84 581.75 C-12.41 577.83 -13.04 572.74 -12.59 569.98 C-12.14 567.22 -11.26 566.06 -9.17 565.17 C-7.08 564.28 -3.10 564.81 -0.07 564.63 C2.96 564.45 7.15 563.57 9.02 564.10 C10.89 564.63 10.80 564.90 11.16 567.84 C11.52 570.78 11.43 577.29 11.16 581.75 C10.89 586.21 10.10 589.78 9.56 594.59 C9.03 599.40 8.40 604.75 7.95 610.64 C7.50 616.52 8.13 623.12 6.88 629.90 C5.63 636.68 2.24 647.02 0.46 651.30 C-1.32 655.58 -2.71 655.40 -3.82 655.58 C-4.92 655.76 -5.81 654.87 -6.17 652.37 C-6.53 649.87 -5.73 646.49 -5.96 640.60 C-6.19 634.72 -7.02 624.91 -7.56 617.06 C-8.09 609.21 -8.46 599.40 -9.17 593.52Z" fill="#fff" stroke="#707070" stroke-width="0.9"/><path d="M-9.17 593.52 C-8.28 594.23 -5.25 596.73 -3.82 597.80 C-2.39 598.87 -2.21 599.94 -0.61 599.94 C0.99 599.94 4.11 598.78 5.81 597.80 C7.50 596.82 8.94 594.68 9.56 594.06" fill="none" stroke="#707070" stroke-width="0.9"/></g><g transform="translate(958 0)"><path d="M-9.60 591.38 C-9.96 588.53 -10.67 584.60 -10.67 580.68 C-10.67 576.76 -10.31 570.43 -9.60 567.84 C-8.89 565.25 -8.17 565.74 -6.39 565.17 C-4.60 564.60 -1.74 564.42 1.11 564.42 C3.96 564.42 8.96 563.17 10.74 565.17 C12.52 567.17 11.81 572.39 11.81 576.40 C11.81 580.41 11.19 586.39 10.74 589.24 C10.29 592.09 9.84 589.42 9.13 593.52 C8.42 597.62 7.08 606.89 6.46 613.85 C5.84 620.81 6.28 629.37 5.39 635.25 C4.50 641.13 2.27 646.75 1.11 649.16 C-0.05 651.57 -0.95 650.59 -1.57 649.70 C-2.20 648.81 -2.28 648.00 -2.64 643.81 C-3.00 639.62 -3.17 630.43 -3.71 624.55 C-4.25 618.66 -5.05 612.96 -5.85 608.50 C-6.65 604.04 -7.90 600.65 -8.53 597.80 C-9.15 594.95 -9.24 594.23 -9.60 591.38Z" fill="#fff" stroke="#707070" stroke-width="0.9"/><path d="M-9.60 591.38 C-8.53 592.27 -5.05 595.57 -3.18 596.73 C-1.31 597.89 0.12 598.70 1.64 598.34 C3.16 597.98 4.58 595.66 5.92 594.59 C7.26 593.52 9.04 592.37 9.67 591.92" fill="none" stroke="#707070" stroke-width="0.9"/></g><g transform="translate(1013 0) scale(-1 1)"><path d="M-9.60 591.38 C-9.96 588.53 -10.67 584.60 -10.67 580.68 C-10.67 576.76 -10.31 570.43 -9.60 567.84 C-8.89 565.25 -8.17 565.74 -6.39 565.17 C-4.60 564.60 -1.74 564.42 1.11 564.42 C3.96 564.42 8.96 563.17 10.74 565.17 C12.52 567.17 11.81 572.39 11.81 576.40 C11.81 580.41 11.19 586.39 10.74 589.24 C10.29 592.09 9.84 589.42 9.13 593.52 C8.42 597.62 7.08 606.89 6.46 613.85 C5.84 620.81 6.28 629.37 5.39 635.25 C4.50 641.13 2.27 646.75 1.11 649.16 C-0.05 651.57 -0.95 650.59 -1.57 649.70 C-2.20 648.81 -2.28 648.00 -2.64 643.81 C-3.00 639.62 -3.17 630.43 -3.71 624.55 C-4.25 618.66 -5.05 612.96 -5.85 608.50 C-6.65 604.04 -7.90 600.65 -8.53 597.80 C-9.15 594.95 -9.24 594.23 -9.60 591.38Z" fill="#fff" stroke="#707070" stroke-width="0.9"/><path d="M-9.60 591.38 C-8.53 592.27 -5.05 595.57 -3.18 596.73 C-1.31 597.89 0.12 598.70 1.64 598.34 C3.16 597.98 4.58 595.66 5.92 594.59 C7.26 593.52 9.04 592.37 9.67 591.92" fill="none" stroke="#707070" stroke-width="0.9"/></g><g transform="translate(1068 0) scale(-1 1)"><path d="M-9.17 593.52 C-9.88 587.63 -11.27 585.67 -11.84 581.75 C-12.41 577.83 -13.04 572.74 -12.59 569.98 C-12.14 567.22 -11.26 566.06 -9.17 565.17 C-7.08 564.28 -3.10 564.81 -0.07 564.63 C2.96 564.45 7.15 563.57 9.02 564.10 C10.89 564.63 10.80 564.90 11.16 567.84 C11.52 570.78 11.43 577.29 11.16 581.75 C10.89 586.21 10.10 589.78 9.56 594.59 C9.03 599.40 8.40 604.75 7.95 610.64 C7.50 616.52 8.13 623.12 6.88 629.90 C5.63 636.68 2.24 647.02 0.46 651.30 C-1.32 655.58 -2.71 655.40 -3.82 655.58 C-4.92 655.76 -5.81 654.87 -6.17 652.37 C-6.53 649.87 -5.73 646.49 -5.96 640.60 C-6.19 634.72 -7.02 624.91 -7.56 617.06 C-8.09 609.21 -8.46 599.40 -9.17 593.52Z" fill="#fff" stroke="#707070" stroke-width="0.9"/><path d="M-9.17 593.52 C-8.28 594.23 -5.25 596.73 -3.82 597.80 C-2.39 598.87 -2.21 599.94 -0.61 599.94 C0.99 599.94 4.11 598.78 5.81 597.80 C7.50 596.82 8.94 594.68 9.56 594.06" fill="none" stroke="#707070" stroke-width="0.9"/></g><g transform="translate(1123 0) scale(-1 1)"><path d="M-8.74 599.94 C-9.45 596.37 -11.77 592.63 -12.48 589.24 C-13.19 585.85 -13.20 582.46 -13.02 579.61 C-12.84 576.76 -12.48 573.90 -11.41 572.12 C-10.34 570.34 -8.12 569.98 -6.60 568.91 C-5.08 567.84 -3.66 566.59 -2.32 565.70 C-0.98 564.81 0.00 563.56 1.43 563.56 C2.86 563.56 4.55 564.27 6.24 565.70 C7.93 567.13 10.34 569.62 11.59 572.12 C12.84 574.62 13.64 577.47 13.73 580.68 C13.82 583.89 12.67 588.88 12.13 591.38 C11.60 593.88 11.05 592.81 10.52 595.66 C9.98 598.51 9.28 602.79 8.92 608.50 C8.56 614.21 8.83 623.30 8.38 629.90 C7.93 636.50 7.49 643.36 6.24 648.09 C4.99 652.82 2.23 657.19 0.89 658.26 C-0.45 659.33 -1.25 657.10 -1.78 654.51 C-2.31 651.92 -1.78 647.73 -2.32 642.74 C-2.85 637.75 -4.01 629.90 -4.99 624.55 C-5.97 619.20 -7.57 614.74 -8.20 610.64 C-8.82 606.54 -8.03 603.51 -8.74 599.94Z" fill="#fff" stroke="#707070" stroke-width="0.9"/><path d="M-8.74 597.80 C-7.49 598.51 -4.55 602.62 -1.25 602.08 C2.05 601.55 9.01 595.84 11.06 594.59" fill="none" stroke="#707070" stroke-width="0.9"/></g><g transform="translate(1178 0) scale(-1 1)"><path d="M-9.87 592.30 C-10.59 589.43 -12.73 588.24 -13.45 585.13 C-14.17 582.02 -14.65 576.28 -14.17 573.65 C-13.69 571.02 -12.73 571.02 -10.58 569.35 C-8.43 567.68 -4.49 563.73 -1.26 563.61 C1.97 563.49 6.27 566.96 8.78 568.63 C11.29 570.30 12.96 570.90 13.80 573.65 C14.64 576.40 14.28 582.02 13.80 585.13 C13.32 588.24 11.53 587.76 10.93 592.30 C10.33 596.84 10.46 606.16 10.22 612.38 C9.98 618.60 10.46 624.34 9.50 629.60 C8.54 634.86 6.51 640.12 4.48 643.94 C2.45 647.77 -1.14 651.83 -2.69 652.55 C-4.25 653.27 -4.61 651.11 -4.85 648.24 C-5.09 645.37 -4.01 640.35 -4.13 635.33 C-4.25 630.31 -4.72 623.62 -5.56 618.12 C-6.40 612.62 -8.43 606.64 -9.15 602.34 C-9.87 598.04 -9.15 595.17 -9.87 592.30Z" fill="#fff" stroke="#707070" stroke-width="0.9"/><path d="M-9.87 592.30 C-9.15 592.78 -7.11 594.33 -5.56 595.17 C-4.00 596.01 -2.21 597.44 -0.54 597.32 C1.13 597.20 2.57 595.29 4.48 594.45 C6.39 593.61 9.86 592.66 10.93 592.30" fill="none" stroke="#707070" stroke-width="0.9"/></g><g transform="translate(1233 0) scale(-1 1)"><path d="M-12.25 591.58 C-12.80 589.19 -13.92 586.68 -14.40 583.69 C-14.88 580.70 -15.48 576.04 -15.12 573.65 C-14.76 571.26 -13.45 570.55 -12.25 569.35 C-11.05 568.15 -10.10 567.68 -7.95 566.48 C-5.80 565.28 -1.97 562.53 0.66 562.17 C3.29 561.81 5.44 563.36 7.83 564.32 C10.22 565.28 13.70 565.64 15.01 567.91 C16.32 570.18 15.84 575.08 15.72 577.95 C15.60 580.82 15.36 582.74 14.29 585.13 C13.21 587.52 10.35 587.76 9.27 592.30 C8.19 596.84 8.55 606.16 7.83 612.38 C7.11 618.60 6.40 624.10 4.97 629.60 C3.54 635.10 1.02 642.03 -0.77 645.38 C-2.56 648.73 -4.71 649.92 -5.79 649.68 C-6.87 649.44 -7.11 647.77 -7.23 643.94 C-7.35 640.12 -6.15 631.99 -6.51 626.73 C-6.87 621.47 -8.62 617.16 -9.38 612.38 C-10.15 607.60 -10.62 601.51 -11.10 598.04 C-11.58 594.57 -11.70 593.97 -12.25 591.58Z" fill="#fff" stroke="#707070" stroke-width="0.9"/><path d="M-11.53 577.95 C-10.69 578.07 -8.30 578.19 -6.51 578.67 C-4.72 579.15 -2.56 580.82 -0.77 580.82 C1.02 580.82 2.58 579.10 4.25 578.67 C5.92 578.24 8.43 578.31 9.27 578.24" fill="none" stroke="#707070" stroke-width="0.9"/><path d="M-12.25 592.30 C-11.29 592.42 -8.42 592.54 -6.51 593.02 C-4.60 593.50 -2.68 595.17 -0.77 595.17 C1.14 595.17 3.30 593.55 4.97 593.02 C6.64 592.49 8.55 592.18 9.27 592.01" fill="none" stroke="#707070" stroke-width="0.9"/></g><g transform="translate(1288 0) scale(-1 1)"><path d="M-17.50 591.58 C-18.22 587.99 -21.04 586.68 -21.80 583.69 C-22.57 580.70 -22.57 576.40 -22.09 573.65 C-21.61 570.90 -20.41 568.62 -18.93 567.19 C-17.45 565.76 -14.87 564.80 -13.20 565.04 C-11.53 565.28 -10.33 568.51 -8.89 568.63 C-7.46 568.75 -6.74 566.12 -4.59 565.76 C-2.44 565.40 1.63 566.48 4.02 566.48 C6.41 566.48 7.37 566.36 9.76 565.76 C12.15 565.16 16.33 562.77 18.36 562.89 C20.39 563.01 21.23 564.21 21.95 566.48 C22.67 568.75 22.91 573.29 22.67 576.52 C22.43 579.75 21.48 583.09 20.52 585.84 C19.56 588.59 17.53 589.08 16.93 593.02 C16.33 596.96 17.41 603.41 16.93 609.51 C16.45 615.61 15.50 624.34 14.06 629.60 C12.62 634.86 10.11 638.32 8.32 641.07 C6.53 643.82 4.50 645.61 3.30 646.09 C2.10 646.57 1.39 646.69 1.15 643.94 C0.91 641.19 1.51 633.90 1.87 629.60 C2.23 625.30 3.54 620.99 3.30 618.12 C3.06 615.25 1.50 613.10 0.43 612.38 C-0.65 611.66 -2.19 612.15 -3.15 613.82 C-4.11 615.49 -4.47 619.31 -5.31 622.42 C-6.15 625.53 -7.45 629.35 -8.17 632.46 C-8.89 635.57 -8.77 639.52 -9.61 641.07 C-10.45 642.62 -11.88 642.75 -13.20 641.79 C-14.51 640.83 -16.55 638.80 -17.50 635.33 C-18.45 631.86 -18.93 626.01 -18.93 620.99 C-18.93 615.97 -17.74 610.11 -17.50 605.21 C-17.26 600.31 -16.78 595.17 -17.50 591.58Z" fill="#fff" stroke="#707070" stroke-width="0.9"/><path d="M-17.50 591.58 C-16.07 591.46 -11.76 590.62 -8.89 590.86 C-6.02 591.10 -2.91 592.90 -0.28 593.02 C2.35 593.14 4.02 591.58 6.89 591.58 C9.76 591.58 15.26 592.78 16.93 593.02" fill="none" stroke="#707070" stroke-width="0.9"/></g><g transform="translate(1343 0) scale(-1 1)"><path d="M-17.73 590.86 C-17.97 586.80 -19.04 582.74 -19.16 579.39 C-19.28 576.04 -19.52 572.69 -18.45 570.78 C-17.38 568.87 -14.98 568.27 -12.71 567.91 C-10.44 567.55 -6.97 568.39 -4.82 568.63 C-2.67 568.87 -1.59 569.71 0.20 569.35 C1.99 568.99 3.79 566.84 5.94 566.48 C8.09 566.12 11.20 566.00 13.11 567.19 C15.02 568.38 16.70 569.94 17.42 573.65 C18.14 577.36 17.66 584.65 17.42 589.43 C17.18 594.21 16.34 596.84 15.98 602.34 C15.62 607.84 16.46 616.44 15.27 622.42 C14.07 628.40 11.08 634.37 8.81 638.20 C6.54 642.03 3.08 644.90 1.64 645.38 C0.20 645.86 -0.04 644.18 0.20 641.07 C0.44 637.96 2.59 630.56 3.07 626.73 C3.55 622.90 3.43 619.80 3.07 618.12 C2.71 616.44 2.35 615.96 0.92 616.68 C-0.51 617.40 -4.58 619.31 -5.54 622.42 C-6.50 625.53 -4.82 632.58 -4.82 635.33 C-4.82 638.08 -4.46 638.92 -5.54 638.92 C-6.62 638.92 -9.60 638.56 -11.27 635.33 C-12.94 632.10 -14.50 624.81 -15.58 619.55 C-16.66 614.29 -17.37 608.55 -17.73 603.77 C-18.09 598.99 -17.49 594.92 -17.73 590.86Z" fill="#fff" stroke="#707070" stroke-width="0.9"/><path d="M-12.71 574.37 C-11.75 574.01 -8.64 572.33 -6.97 572.21 C-5.30 572.09 -4.22 573.89 -2.67 573.65 C-1.12 573.41 -0.04 571.14 2.35 570.78 C4.74 570.42 10.12 571.38 11.68 571.50" fill="none" stroke="#707070" stroke-width="0.9"/><path d="M-17.73 589.43 C-16.89 590.27 -15.46 593.38 -12.71 594.45 C-9.96 595.53 -5.06 596.00 -1.23 595.88 C2.60 595.76 7.25 594.81 10.24 593.73 C13.23 592.65 15.62 590.15 16.70 589.43" fill="none" stroke="#707070" stroke-width="0.9"/></g><g transform="translate(1398 0) scale(-1 1)"><path d="M-15.09 590.86 C-15.09 586.80 -17.12 583.93 -17.24 580.82 C-17.36 577.71 -16.77 574.00 -15.81 572.21 C-14.85 570.42 -12.81 570.18 -11.50 570.06 C-10.19 569.94 -9.47 571.62 -7.92 571.50 C-6.37 571.38 -4.09 569.47 -2.18 569.35 C-0.27 569.23 2.12 570.18 3.56 570.78 C5.00 571.38 5.23 573.17 6.43 572.93 C7.62 572.69 9.29 569.47 10.73 569.35 C12.17 569.23 14.20 570.30 15.04 572.21 C15.88 574.12 16.11 577.71 15.75 580.82 C15.39 583.93 13.36 586.80 12.88 590.86 C12.40 594.92 13.48 600.43 12.88 605.21 C12.28 609.99 10.85 615.48 9.30 619.55 C7.75 623.62 5.59 626.97 3.56 629.60 C1.53 632.23 -1.70 634.85 -2.90 635.33 C-4.09 635.81 -4.09 634.61 -3.61 632.46 C-3.13 630.31 -0.99 626.00 -0.03 622.42 C0.93 618.83 2.01 614.06 2.13 610.95 C2.25 607.84 1.41 605.09 0.69 603.77 C-0.03 602.45 -1.11 602.58 -2.18 603.06 C-3.25 603.54 -4.92 604.37 -5.76 606.64 C-6.60 608.91 -6.84 612.85 -7.20 616.68 C-7.56 620.51 -7.20 627.69 -7.92 629.60 C-8.64 631.51 -10.19 629.84 -11.50 628.16 C-12.81 626.48 -14.85 623.38 -15.81 619.55 C-16.77 615.72 -17.36 609.99 -17.24 605.21 C-17.12 600.43 -15.09 594.92 -15.09 590.86Z" fill="#fff" stroke="#707070" stroke-width="0.9"/><path d="M-12.94 572.93 C-12.46 573.05 -10.91 573.65 -10.07 573.65 C-9.23 573.65 -8.28 573.05 -7.92 572.93" fill="none" stroke="#707070" stroke-width="0.9"/><path d="M-15.09 591.58 C-13.18 591.70 -8.27 592.54 -3.61 592.30 C1.05 592.06 10.13 590.51 12.88 590.15" fill="none" stroke="#707070" stroke-width="0.9"/></g><path d="M612 589.5 L643.5 628 M643.5 589.5 L612 628" stroke="#f00" stroke-width="4.5"/></svg>
<!--/CHART-->
<!-- table card -->
<div class="a" style="left:97px;top:715px;width:1726px;height:212px;border:1px solid #e0e0e0;border-radius:1px 1px 5px 5px;background:#fff;box-shadow:0 1px 2px rgba(0,0,0,.12)"></div>

<svg class="a" style="left:129px;top:250px;z-index:4" width="28" height="21" viewBox="0 0 28 21"><rect x="0" y="0" width="28" height="10.3" rx="4.2" fill="#33c4cc"/><rect x="0" y="11.4" width="28" height="9.6" rx="4.2" fill="#33c4cc"/><g fill="#fff"><path d="M3 8.3 V6.5 Q3 4.3 4.9 4.3 Q6.8 4.3 6.8 6.5 V8.3Z"/><path d="M9.1 8.3 V5 Q9.1 3 11 3 Q12.9 3 12.9 5 V8.3Z"/><path d="M15.1 8.3 V5 Q15.1 3 17 3 Q18.9 3 18.9 5 V8.3Z"/><path d="M21.2 8.3 V6.5 Q21.2 4.3 23.1 4.3 Q25 4.3 25 6.5 V8.3Z"/><path d="M3 13.2 H6.8 V15 Q6.8 17.4 4.9 17.4 Q3 17.4 3 15Z"/><path d="M9.1 13.2 H12.9 V16 Q12.9 17.9 11 17.9 Q9.1 17.9 9.1 16Z"/><path d="M15.1 13.2 H18.9 V16 Q18.9 17.9 17 17.9 Q15.1 17.9 15.1 16Z"/><path d="M21.2 13.2 H25 V15 Q25 17.4 23.1 17.4 Q21.2 17.4 21.2 15Z"/></g></svg>
<svg class="a" style="left:227px;top:250px;z-index:4" width="12" height="24" viewBox="0 0 12 24"><circle cx="6" cy="2.5" r="2.2" fill="#737373"/><path d="M2.5 8 H7.5 V20 H10 Q10.8 20 10.8 21.5 Q10.8 23 10 23 H2 Q1.2 23 1.2 21.5 Q1.2 20 2 20 H4.5 V11 H2.5 Q1.7 11 1.7 9.5 Q1.7 8 2.5 8Z" fill="#737373"/></svg>
<svg class="a" style="left:1761px;top:248px;z-index:4" width="32" height="26" viewBox="0 0 32 26"><path d="M2.4 13 C7 5 11 2.4 15.8 2.4 C20.6 2.4 24.6 5 29.8 13 C24.6 21 20.6 23.5 15.8 23.5 C11 23.5 7 21 2.4 13Z" fill="#6b6b6b"/><circle cx="15.8" cy="13" r="6.3" fill="#fff"/><circle cx="16.3" cy="12.6" r="4" fill="#6b6b6b"/><path d="M1.7 1.9 L30.5 24.4" stroke="#fff" stroke-width="4.2"/><path d="M1.7 1.3 L30.5 24" stroke="#6b6b6b" stroke-width="2.3" stroke-linecap="round"/></svg>
<div class="a th" style="left:114px;top:731px">Data</div>
<div class="a th" style="left:198px;top:731px">Elemento</div>
<div class="a th" style="left:341px;top:731px">Nome do tratamento</div>
<div class="a th" style="left:1144px;top:731px">Observação</div>
<div class="a th" style="left:1314px;top:731px;width:100px;text-align:right">P. final</div>
<div class="a th" style="left:1422px;top:722px">Vista</div>
<div class="a th" style="left:1471px;top:731px;width:100px;text-align:center">Utilizador</div>
<div class="a th" style="left:1599px;top:731px;width:100px;text-align:center">Status</div>
<div class="a th" style="left:1710px;top:731px;width:100px;text-align:center">Ações</div>
<div class="a hl" style="left:98px;top:759px;width:1724px"></div>
<div class="a td" style="left:114px;top:774px">2025-04-24</div>
<div class="a td" style="left:198px;top:774px">27</div>
<div class="a td" style="left:341px;top:774px">Restauração directa definitiva em resina composta de duas faces</div>
<div class="a td" style="left:1314px;top:774px;width:100px;text-align:right">55,00 €</div>
<svg class="a" style="left:1426px;top:775px;z-index:4" width="18" height="14" viewBox="0 0 18 14"><rect x="0.2" y="0" width="17.6" height="6.9" rx="1.8" fill="#111"/><rect x="0.2" y="7.8" width="17.6" height="6.2" rx="1.8" fill="#111"/><g fill="#fff"><path d="M1.2 6 V4.2 Q1.2 3.0 2.6 3.0 Q4.1 3.0 4.1 4.2 V6Z"/><path d="M4.8 6 V3.3 Q4.8 2.1 6.4 2.1 Q8.1 2.1 8.1 3.3 V6Z"/><path d="M8.9 6 V3.3 Q8.9 2.1 10.6 2.1 Q12.2 2.1 12.2 3.3 V6Z"/><path d="M13.0 6 V4.2 Q13.0 3.0 14.7 3.0 Q16.3 3.0 16.3 4.2 V6Z"/><path d="M1.2 8.9 H4.1 V10.6 Q4.1 11.9 2.6 11.9 Q1.2 11.9 1.2 10.6Z"/><path d="M4.8 8.9 H8.1 V10.6 Q8.1 11.9 6.4 11.9 Q4.8 11.9 4.8 10.6Z"/><path d="M8.9 8.9 H12.2 V10.6 Q12.2 11.9 10.6 11.9 Q8.9 11.9 8.9 10.6Z"/><path d="M13.0 8.9 H16.3 V10.6 Q16.3 11.9 14.7 11.9 Q13.0 11.9 13.0 10.6Z"/></g></svg>
<div class="a mb" style="left:1508px;top:764px">MB</div>
<div class="a chip" style="left:1602px;top:770px">Realizado P...</div>
<svg class="a" style="left:1724px;top:774px" width="14" height="16" viewBox="0 0 14 16"><path d="M1 0 H9 L13 4 V15 Q13 16 12 16 H2 Q1 16 1 15Z" fill="#33c4cc"/><path d="M9 0 V4 H13" fill="#fff"/><path d="M9.2 0.3 V3.8 H12.7" fill="#33c4cc"/><text x="7" y="11.5" font-size="4.6" fill="#fff" text-anchor="middle" font-family="Liberation Sans" font-weight="bold">PDF</text></svg>
<svg class="a" style="left:1749px;top:775px" width="18" height="15" viewBox="0 0 18 15"><path d="M9 0.5 Q14.5 0.5 17.8 7.5 Q14.5 14.5 9 14.5 Q3.5 14.5 0.2 7.5 Q3.5 0.5 9 0.5Z" fill="#33c4cc"/><circle cx="9" cy="7.5" r="4" fill="#fff"/><circle cx="9.3" cy="7.2" r="2.6" fill="#33c4cc"/><circle cx="8" cy="6" r="1.3" fill="#fff"/></svg>
<svg class="a" style="left:1778px;top:774px" width="18" height="16" viewBox="0 0 18 16"><path d="M0.5 15.5 L1.5 11.5 L11.5 1.5 L14.5 4.5 L4.5 14.5Z" fill="#33c4cc"/><path d="M12.5 0.8 Q13.5 -0.2 14.5 0.8 L16.2 2.5 Q17.2 3.5 16.2 4.5 L15.5 5.2 L12 1.5Z" fill="#33c4cc"/></svg>
<div class="a hl" style="left:98px;top:804px;width:1724px"></div>
<div class="a td" style="left:114px;top:819px">2025-03-07</div>
<div class="a td" style="left:198px;top:819px">25</div>
<div class="a td" style="left:341px;top:819px">Restauração directa definitiva em resina composta de duas faces</div>
<div class="a td" style="left:1314px;top:819px;width:100px;text-align:right">55,00 €</div>
<svg class="a" style="left:1426px;top:820px;z-index:4" width="18" height="14" viewBox="0 0 18 14"><rect x="0.2" y="0" width="17.6" height="6.9" rx="1.8" fill="#111"/><rect x="0.2" y="7.8" width="17.6" height="6.2" rx="1.8" fill="#111"/><g fill="#fff"><path d="M1.2 6 V4.2 Q1.2 3.0 2.6 3.0 Q4.1 3.0 4.1 4.2 V6Z"/><path d="M4.8 6 V3.3 Q4.8 2.1 6.4 2.1 Q8.1 2.1 8.1 3.3 V6Z"/><path d="M8.9 6 V3.3 Q8.9 2.1 10.6 2.1 Q12.2 2.1 12.2 3.3 V6Z"/><path d="M13.0 6 V4.2 Q13.0 3.0 14.7 3.0 Q16.3 3.0 16.3 4.2 V6Z"/><path d="M1.2 8.9 H4.1 V10.6 Q4.1 11.9 2.6 11.9 Q1.2 11.9 1.2 10.6Z"/><path d="M4.8 8.9 H8.1 V10.6 Q8.1 11.9 6.4 11.9 Q4.8 11.9 4.8 10.6Z"/><path d="M8.9 8.9 H12.2 V10.6 Q12.2 11.9 10.6 11.9 Q8.9 11.9 8.9 10.6Z"/><path d="M13.0 8.9 H16.3 V10.6 Q16.3 11.9 14.7 11.9 Q13.0 11.9 13.0 10.6Z"/></g></svg>
<div class="a mb" style="left:1508px;top:809px">MB</div>
<div class="a chip" style="left:1602px;top:815px">Realizado P...</div>
<svg class="a" style="left:1724px;top:819px" width="14" height="16" viewBox="0 0 14 16"><path d="M1 0 H9 L13 4 V15 Q13 16 12 16 H2 Q1 16 1 15Z" fill="#33c4cc"/><path d="M9 0 V4 H13" fill="#fff"/><path d="M9.2 0.3 V3.8 H12.7" fill="#33c4cc"/><text x="7" y="11.5" font-size="4.6" fill="#fff" text-anchor="middle" font-family="Liberation Sans" font-weight="bold">PDF</text></svg>
<svg class="a" style="left:1749px;top:820px" width="18" height="15" viewBox="0 0 18 15"><path d="M9 0.5 Q14.5 0.5 17.8 7.5 Q14.5 14.5 9 14.5 Q3.5 14.5 0.2 7.5 Q3.5 0.5 9 0.5Z" fill="#33c4cc"/><circle cx="9" cy="7.5" r="4" fill="#fff"/><circle cx="9.3" cy="7.2" r="2.6" fill="#33c4cc"/><circle cx="8" cy="6" r="1.3" fill="#fff"/></svg>
<svg class="a" style="left:1778px;top:819px" width="18" height="16" viewBox="0 0 18 16"><path d="M0.5 15.5 L1.5 11.5 L11.5 1.5 L14.5 4.5 L4.5 14.5Z" fill="#33c4cc"/><path d="M12.5 0.8 Q13.5 -0.2 14.5 0.8 L16.2 2.5 Q17.2 3.5 16.2 4.5 L15.5 5.2 L12 1.5Z" fill="#33c4cc"/></svg>
<div class="a hl" style="left:98px;top:849px;width:1724px"></div>
<div class="a" style="left:98px;top:850px;width:1724px;height:17px;overflow:hidden;z-index:4"><div style="position:absolute;left:0;top:-849px;width:1917px;height:1028px"><div style="position:absolute;left:-98px;top:0;width:1917px;height:1028px"><div class="a td" style="left:114px;top:864px">2025-03-07</div><div class="a td" style="left:198px;top:864px">25</div><div class="a td" style="left:341px;top:864px">Restauração directa definitiva em resina composta de duas faces</div><div class="a td" style="left:1314px;top:864px;width:100px;text-align:right">55,00 €</div><svg class="a" style="left:1426px;top:865px;z-index:4" width="18" height="14" viewBox="0 0 18 14"><rect x="0.2" y="0" width="17.6" height="6.9" rx="1.8" fill="#111"/><rect x="0.2" y="7.8" width="17.6" height="6.2" rx="1.8" fill="#111"/><g fill="#fff"><path d="M1.2 6 V4.2 Q1.2 3.0 2.6 3.0 Q4.1 3.0 4.1 4.2 V6Z"/><path d="M4.8 6 V3.3 Q4.8 2.1 6.4 2.1 Q8.1 2.1 8.1 3.3 V6Z"/><path d="M8.9 6 V3.3 Q8.9 2.1 10.6 2.1 Q12.2 2.1 12.2 3.3 V6Z"/><path d="M13.0 6 V4.2 Q13.0 3.0 14.7 3.0 Q16.3 3.0 16.3 4.2 V6Z"/><path d="M1.2 8.9 H4.1 V10.6 Q4.1 11.9 2.6 11.9 Q1.2 11.9 1.2 10.6Z"/><path d="M4.8 8.9 H8.1 V10.6 Q8.1 11.9 6.4 11.9 Q4.8 11.9 4.8 10.6Z"/><path d="M8.9 8.9 H12.2 V10.6 Q12.2 11.9 10.6 11.9 Q8.9 11.9 8.9 10.6Z"/><path d="M13.0 8.9 H16.3 V10.6 Q16.3 11.9 14.7 11.9 Q13.0 11.9 13.0 10.6Z"/></g></svg><div class="a mb" style="left:1508px;top:854px">MB</div><div class="a chip" style="left:1602px;top:860px">Realizado P...</div><svg class="a" style="left:1724px;top:864px" width="14" height="16" viewBox="0 0 14 16"><path d="M1 0 H9 L13 4 V15 Q13 16 12 16 H2 Q1 16 1 15Z" fill="#33c4cc"/><path d="M9 0 V4 H13" fill="#fff"/><path d="M9.2 0.3 V3.8 H12.7" fill="#33c4cc"/><text x="7" y="11.5" font-size="4.6" fill="#fff" text-anchor="middle" font-family="Liberation Sans" font-weight="bold">PDF</text></svg><svg class="a" style="left:1749px;top:865px" width="18" height="15" viewBox="0 0 18 15"><path d="M9 0.5 Q14.5 0.5 17.8 7.5 Q14.5 14.5 9 14.5 Q3.5 14.5 0.2 7.5 Q3.5 0.5 9 0.5Z" fill="#33c4cc"/><circle cx="9" cy="7.5" r="4" fill="#fff"/><circle cx="9.3" cy="7.2" r="2.6" fill="#33c4cc"/><circle cx="8" cy="6" r="1.3" fill="#fff"/></svg><svg class="a" style="left:1778px;top:864px" width="18" height="16" viewBox="0 0 18 16"><path d="M0.5 15.5 L1.5 11.5 L11.5 1.5 L14.5 4.5 L4.5 14.5Z" fill="#33c4cc"/><path d="M12.5 0.8 Q13.5 -0.2 14.5 0.8 L16.2 2.5 Q17.2 3.5 16.2 4.5 L15.5 5.2 L12 1.5Z" fill="#33c4cc"/></svg></div></div><div style="position:absolute;left:0;top:0;width:100%;height:100%;background:linear-gradient(to bottom,rgba(0,0,0,.02),rgba(0,0,0,.16));z-index:9"></div></div>
<div class="a" style="left:1430px;top:890px;font-size:12px;color:#222">Linhas por página:</div>
<div class="a" style="left:1562px;top:890px;font-size:12px;color:#222">10</div>
<svg class="a" style="left:1588px;top:894px" width="15" height="9" viewBox="0 0 15 9"><path d="M0.5 0.5 H14.5 L7.5 8.5Z" fill="#6b6b6b"/></svg>
<div class="a" style="left:1562px;top:913px;width:45px;height:1px;background:#8a8a8a"></div>
<div class="a" style="left:1646px;top:890px;font-size:12px;color:#222">1-5 de 5</div>
<svg class="a" style="left:1732px;top:888px" width="13" height="18" viewBox="0 0 13 18"><path d="M10.5 1.5 L3 9 L10.5 16.5" fill="none" stroke="#b0b0b0" stroke-width="2"/></svg>
<div class="a" style="left:1764px;top:890px;font-size:12px;color:#222">1</div>
<svg class="a" style="left:1790px;top:888px" width="13" height="18" viewBox="0 0 13 18"><path d="M2.5 1.5 L10 9 L2.5 16.5" fill="none" stroke="#b0b0b0" stroke-width="2"/></svg>
<div class="a" style="left:1767px;top:943px;width:56px;height:56px;border-radius:50%;background:#33c4cc;box-shadow:0 3px 6px rgba(0,0,0,.3);z-index:6"></div>
<svg class="a" style="left:1777px;top:950px;z-index:7" width="40" height="42" viewBox="0 0 40 42"><path d="M3.8 8.5 Q3.8 1.2 11.5 2.3 L30 10.3 Q37 13.3 36.6 20 Q36.3 24.8 31.5 27.8 L16.5 37.8 Q7.5 41.5 4.5 35.5 Q3.8 33.5 3.8 30Z" fill="none" stroke="#fff" stroke-width="2.7" stroke-linejoin="round"/><path d="M14 3.5 V26.5" stroke="#fff" stroke-width="2.7"/><path d="M14.3 15 L35.5 22.3" stroke="#fff" stroke-width="2.7"/><path d="M4.5 31.8 L20 25.6 Q24.5 23.6 24.8 20.5" fill="none" stroke="#fff" stroke-width="2.7"/></svg>
</body></html>
